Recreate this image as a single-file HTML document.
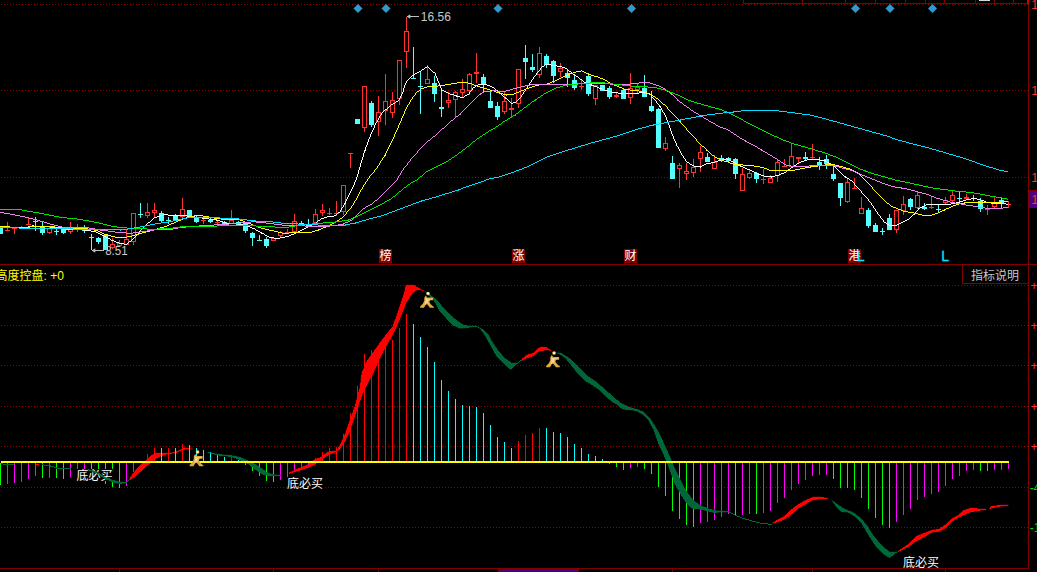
<!DOCTYPE html>
<html><head><meta charset="utf-8"><title>chart</title>
<style>html,body{margin:0;padding:0;background:#000;overflow:hidden}body{width:1037px;height:572px}svg{display:block}</style>
</head><body>
<svg width="1037" height="572" viewBox="0 0 1037 572">
<rect x="0" y="0" width="1037" height="572" fill="#000"/>
<g shape-rendering="crispEdges" stroke-width="1" fill="none">
<line x1="1" y1="4.5" x2="1028" y2="4.5" stroke="#900000" stroke-dasharray="1,2"/>
<line x1="1" y1="90.5" x2="1028" y2="90.5" stroke="#900000" stroke-dasharray="1,2"/>
<line x1="1" y1="177.5" x2="1028" y2="177.5" stroke="#900000" stroke-dasharray="1,2"/>
<line x1="1" y1="285.5" x2="1028" y2="285.5" stroke="#900000" stroke-dasharray="1,2"/>
<line x1="1" y1="325.5" x2="1028" y2="325.5" stroke="#900000" stroke-dasharray="1,2"/>
<line x1="1" y1="365.5" x2="1028" y2="365.5" stroke="#900000" stroke-dasharray="1,2"/>
<line x1="1" y1="406.5" x2="1028" y2="406.5" stroke="#900000" stroke-dasharray="1,2"/>
<line x1="1" y1="446.5" x2="1028" y2="446.5" stroke="#900000" stroke-dasharray="1,2"/>
<line x1="1" y1="487.5" x2="1028" y2="487.5" stroke="#900000" stroke-dasharray="1,2"/>
<line x1="1" y1="527.5" x2="1028" y2="527.5" stroke="#900000" stroke-dasharray="1,2"/>
<line x1="1028.5" y1="0" x2="1028.5" y2="569" stroke="#800000"/>
<line x1="0" y1="264.5" x2="1037" y2="264.5" stroke="#800000"/>
<line x1="0" y1="568.5" x2="1029" y2="568.5" stroke="#800000"/>
<line x1="743" y1="3.5" x2="1029" y2="3.5" stroke="#800000"/>
<line x1="743.5" y1="0" x2="743.5" y2="4" stroke="#800000"/>
<line x1="802.5" y1="0" x2="802.5" y2="4" stroke="#800000"/>
<line x1="845.5" y1="0" x2="845.5" y2="4" stroke="#800000"/>
<line x1="875.5" y1="0" x2="875.5" y2="4" stroke="#800000"/>
<line x1="905.5" y1="0" x2="905.5" y2="4" stroke="#800000"/>
<line x1="925.5" y1="0" x2="925.5" y2="4" stroke="#800000"/>
<line x1="944.5" y1="0" x2="944.5" y2="4" stroke="#800000"/>
<line x1="975.5" y1="0" x2="975.5" y2="4" stroke="#800000"/>
<line x1="994.5" y1="0" x2="994.5" y2="4" stroke="#800000"/>
<line x1="1013.5" y1="0" x2="1013.5" y2="4" stroke="#800000"/>
<rect x="1027" y="0" width="2" height="4" fill="#d00000" stroke="none"/>
<rect x="979" y="0" width="11" height="1" fill="#d8d8d8" stroke="none"/>
<line x1="119.5" y1="568" x2="119.5" y2="572" stroke="#800000"/>
<line x1="273.5" y1="568" x2="273.5" y2="572" stroke="#800000"/>
<line x1="378.5" y1="568" x2="378.5" y2="572" stroke="#800000"/>
<line x1="498.5" y1="568" x2="498.5" y2="572" stroke="#800000"/>
<line x1="578.5" y1="568" x2="578.5" y2="572" stroke="#800000"/>
<line x1="672.5" y1="568" x2="672.5" y2="572" stroke="#800000"/>
<line x1="812.5" y1="568" x2="812.5" y2="572" stroke="#800000"/>
<line x1="945.5" y1="568" x2="945.5" y2="572" stroke="#800000"/>
<rect x="499" y="569" width="79" height="3" fill="#4b0082" stroke="none"/>
<path d="M962.5 264.5V283.5H1028.5" stroke="#800000"/>
<rect x="1029" y="190" width="8" height="18" fill="#4b0082" stroke="none"/>
<line x1="1029" y1="190.5" x2="1037" y2="190.5" stroke="#800000"/><line x1="1029" y1="207.5" x2="1037" y2="207.5" stroke="#800000"/>
</g>
<path d="M358 4 L362.5 8.5 L358 13 L353.5 8.5Z" fill="#3399cc"/>
<path d="M386 4 L390.5 8.5 L386 13 L381.5 8.5Z" fill="#3399cc"/>
<path d="M498 4 L502.5 8.5 L498 13 L493.5 8.5Z" fill="#3399cc"/>
<path d="M631.5 4 L636.0 8.5 L631.5 13 L627.0 8.5Z" fill="#3399cc"/>
<path d="M855.5 4 L860.0 8.5 L855.5 13 L851.0 8.5Z" fill="#3399cc"/>
<path d="M890 4 L894.5 8.5 L890 13 L885.5 8.5Z" fill="#3399cc"/>
<path d="M932.5 4 L937.0 8.5 L932.5 13 L928.0 8.5Z" fill="#3399cc"/>
<g shape-rendering="crispEdges">
<rect x="0" y="227" width="1" height="7" fill="#54ffff"/>
<rect x="-2" y="228" width="5" height="6" fill="#54ffff"/>
<rect x="7" y="222" width="1" height="9" fill="#ff3232"/>
<rect x="5" y="230" width="5" height="1" fill="#ff3232"/>
<rect x="14" y="228" width="1" height="6" fill="#ff3232"/>
<rect x="12" y="228" width="5" height="1" fill="#ff3232"/>
<rect x="21" y="226" width="1" height="3" fill="#ff3232"/>
<rect x="19" y="228" width="5" height="1" fill="#ff3232"/>
<rect x="28" y="217" width="1" height="8" fill="#ff3232"/>
<rect x="26" y="224" width="5" height="1" fill="#ff3232"/>
<rect x="35" y="217" width="1" height="14" fill="#54ffff"/>
<rect x="33" y="221" width="5" height="1" fill="#54ffff"/>
<rect x="42" y="222" width="1" height="13" fill="#54ffff"/>
<rect x="40" y="226" width="5" height="7" fill="#54ffff"/>
<rect x="49" y="227" width="1" height="1" fill="#ff3232"/>
<rect x="49" y="233" width="1" height="1" fill="#ff3232"/>
<rect x="47.5" y="228.5" width="4" height="4" fill="#000" stroke="#ff3232" stroke-width="1"/>
<rect x="56" y="228" width="1" height="7" fill="#54ffff"/>
<rect x="54" y="231" width="5" height="1" fill="#54ffff"/>
<rect x="63" y="229" width="1" height="5" fill="#54ffff"/>
<rect x="61" y="229" width="5" height="4" fill="#54ffff"/>
<rect x="70" y="222" width="1" height="5" fill="#ff3232"/>
<rect x="70" y="232" width="1" height="2" fill="#ff3232"/>
<rect x="68.5" y="227.5" width="4" height="4" fill="#000" stroke="#ff3232" stroke-width="1"/>
<rect x="77" y="224" width="1" height="8" fill="#ff3232"/>
<rect x="75" y="229" width="5" height="1" fill="#ff3232"/>
<rect x="84" y="225" width="1" height="8" fill="#54ffff"/>
<rect x="82" y="230" width="5" height="1" fill="#54ffff"/>
<rect x="91" y="234" width="1" height="16" fill="#54ffff"/>
<rect x="89" y="237" width="5" height="1" fill="#54ffff"/>
<rect x="98" y="237" width="1" height="7" fill="#54ffff"/>
<rect x="96" y="238" width="5" height="4" fill="#54ffff"/>
<rect x="105" y="235" width="1" height="15" fill="#54ffff"/>
<rect x="103" y="235" width="5" height="15" fill="#54ffff"/>
<rect x="112" y="238" width="1" height="6" fill="#ff3232"/>
<rect x="112" y="248" width="1" height="1" fill="#ff3232"/>
<rect x="110.5" y="244.5" width="4" height="3" fill="#000" stroke="#ff3232" stroke-width="1"/>
<rect x="119" y="240" width="1" height="3" fill="#ff3232"/>
<rect x="117.5" y="243.5" width="4" height="2" fill="#000" stroke="#ff3232" stroke-width="1"/>
<rect x="126" y="230" width="1" height="9" fill="#ff3232"/>
<rect x="124.5" y="239.5" width="4" height="5" fill="#000" stroke="#ff3232" stroke-width="1"/>
<rect x="133" y="242" width="1" height="3" fill="#ff3232"/>
<rect x="131.5" y="213.5" width="4" height="28" fill="#000" stroke="#ff3232" stroke-width="1"/>
<rect x="140" y="203" width="1" height="15" fill="#54ffff"/>
<rect x="138" y="214" width="5" height="1" fill="#54ffff"/>
<rect x="147" y="203" width="1" height="9" fill="#ff3232"/>
<rect x="147" y="216" width="1" height="2" fill="#ff3232"/>
<rect x="145.5" y="212.5" width="4" height="3" fill="#000" stroke="#ff3232" stroke-width="1"/>
<rect x="154" y="203" width="1" height="7" fill="#ff3232"/>
<rect x="154" y="213" width="1" height="4" fill="#ff3232"/>
<rect x="152.5" y="210.5" width="4" height="2" fill="#000" stroke="#ff3232" stroke-width="1"/>
<rect x="161" y="211" width="1" height="11" fill="#54ffff"/>
<rect x="159" y="213" width="5" height="8" fill="#54ffff"/>
<rect x="168" y="217" width="1" height="7" fill="#54ffff"/>
<rect x="166" y="220" width="5" height="1" fill="#54ffff"/>
<rect x="175" y="214" width="1" height="6" fill="#54ffff"/>
<rect x="173" y="216" width="5" height="4" fill="#54ffff"/>
<rect x="182" y="198" width="1" height="11" fill="#ff3232"/>
<rect x="182" y="217" width="1" height="2" fill="#ff3232"/>
<rect x="180.5" y="209.5" width="4" height="7" fill="#000" stroke="#ff3232" stroke-width="1"/>
<rect x="189" y="210" width="1" height="7" fill="#54ffff"/>
<rect x="187" y="210" width="5" height="7" fill="#54ffff"/>
<rect x="196" y="216" width="1" height="7" fill="#54ffff"/>
<rect x="194" y="218" width="5" height="4" fill="#54ffff"/>
<rect x="203" y="219" width="1" height="5" fill="#ff3232"/>
<rect x="201" y="220" width="5" height="1" fill="#ff3232"/>
<rect x="210" y="218" width="1" height="5" fill="#54ffff"/>
<rect x="208" y="220" width="5" height="2" fill="#54ffff"/>
<rect x="217" y="220" width="1" height="5" fill="#ff3232"/>
<rect x="215" y="222" width="5" height="1" fill="#ff3232"/>
<rect x="224" y="221" width="1" height="4" fill="#54ffff"/>
<rect x="222" y="222" width="5" height="2" fill="#54ffff"/>
<rect x="231" y="210" width="1" height="10" fill="#ff3232"/>
<rect x="229.5" y="220.5" width="4" height="3" fill="#000" stroke="#ff3232" stroke-width="1"/>
<rect x="238" y="221" width="1" height="5" fill="#54ffff"/>
<rect x="236" y="222" width="5" height="4" fill="#54ffff"/>
<rect x="245" y="222" width="1" height="11" fill="#54ffff"/>
<rect x="243" y="223" width="5" height="8" fill="#54ffff"/>
<rect x="252" y="232" width="1" height="14" fill="#54ffff"/>
<rect x="250" y="233" width="5" height="5" fill="#54ffff"/>
<rect x="259" y="235" width="1" height="5" fill="#54ffff"/>
<rect x="257" y="240" width="5" height="1" fill="#54ffff"/>
<rect x="266" y="237" width="1" height="11" fill="#54ffff"/>
<rect x="264" y="239" width="5" height="7" fill="#54ffff"/>
<rect x="271.5" y="238.5" width="4" height="2" fill="#000" stroke="#ff3232" stroke-width="1"/>
<rect x="280" y="231" width="1" height="1" fill="#ff3232"/>
<rect x="280" y="236" width="1" height="2" fill="#ff3232"/>
<rect x="278.5" y="232.5" width="4" height="3" fill="#000" stroke="#ff3232" stroke-width="1"/>
<rect x="287" y="229" width="1" height="5" fill="#ff3232"/>
<rect x="285" y="232" width="5" height="1" fill="#ff3232"/>
<rect x="294" y="214" width="1" height="7" fill="#ff3232"/>
<rect x="292.5" y="221.5" width="4" height="10" fill="#000" stroke="#ff3232" stroke-width="1"/>
<rect x="301" y="221" width="1" height="5" fill="#54ffff"/>
<rect x="299" y="223" width="5" height="1" fill="#54ffff"/>
<rect x="308" y="219" width="1" height="6" fill="#54ffff"/>
<rect x="306" y="225" width="5" height="1" fill="#54ffff"/>
<rect x="315" y="209" width="1" height="5" fill="#ff3232"/>
<rect x="313.5" y="214.5" width="4" height="8" fill="#000" stroke="#ff3232" stroke-width="1"/>
<rect x="322" y="204" width="1" height="6" fill="#ff3232"/>
<rect x="322" y="213" width="1" height="3" fill="#ff3232"/>
<rect x="320.5" y="210.5" width="4" height="2" fill="#000" stroke="#ff3232" stroke-width="1"/>
<rect x="329" y="208" width="1" height="7" fill="#ff3232"/>
<rect x="327" y="213" width="5" height="1" fill="#ff3232"/>
<rect x="336" y="201" width="1" height="12" fill="#ff3232"/>
<rect x="336" y="214" width="1" height="2" fill="#ff3232"/>
<rect x="334" y="213" width="5" height="1" fill="#ff3232"/>
<rect x="343" y="212" width="1" height="3" fill="#ff3232"/>
<rect x="341.5" y="185.5" width="4" height="26" fill="#000" stroke="#ff3232" stroke-width="1"/>
<rect x="350" y="153" width="1" height="15" fill="#ff3232"/>
<rect x="348" y="153" width="5" height="1" fill="#ff3232"/>
<rect x="357" y="119" width="1" height="5" fill="#54ffff"/>
<rect x="355" y="119" width="5" height="5" fill="#54ffff"/>
<rect x="364" y="128" width="1" height="4" fill="#ff3232"/>
<rect x="362.5" y="86.5" width="4" height="41" fill="#000" stroke="#ff3232" stroke-width="1"/>
<rect x="371" y="101" width="1" height="26" fill="#54ffff"/>
<rect x="369" y="103" width="5" height="22" fill="#54ffff"/>
<rect x="378" y="96" width="1" height="16" fill="#ff3232"/>
<rect x="378" y="122" width="1" height="14" fill="#ff3232"/>
<rect x="376.5" y="112.5" width="4" height="9" fill="#000" stroke="#ff3232" stroke-width="1"/>
<rect x="385" y="74" width="1" height="27" fill="#ff3232"/>
<rect x="385" y="111" width="1" height="14" fill="#ff3232"/>
<rect x="383.5" y="101.5" width="4" height="9" fill="#000" stroke="#ff3232" stroke-width="1"/>
<rect x="392" y="92" width="1" height="8" fill="#ff3232"/>
<rect x="392" y="113" width="1" height="5" fill="#ff3232"/>
<rect x="390.5" y="100.5" width="4" height="12" fill="#000" stroke="#ff3232" stroke-width="1"/>
<rect x="399" y="99" width="1" height="6" fill="#ff3232"/>
<rect x="397.5" y="60.5" width="4" height="38" fill="#000" stroke="#ff3232" stroke-width="1"/>
<rect x="406" y="17" width="1" height="14" fill="#ff3232"/>
<rect x="406" y="52" width="1" height="16" fill="#ff3232"/>
<rect x="404.5" y="31.5" width="4" height="20" fill="#000" stroke="#ff3232" stroke-width="1"/>
<rect x="413" y="47" width="1" height="31" fill="#54ffff"/>
<rect x="411" y="78" width="5" height="1" fill="#54ffff"/>
<rect x="420" y="72" width="1" height="42" fill="#54ffff"/>
<rect x="418" y="86" width="5" height="1" fill="#54ffff"/>
<rect x="427" y="65" width="1" height="14" fill="#ff3232"/>
<rect x="425.5" y="79.5" width="4" height="4" fill="#000" stroke="#ff3232" stroke-width="1"/>
<rect x="434" y="76" width="1" height="26" fill="#54ffff"/>
<rect x="432" y="83" width="5" height="11" fill="#54ffff"/>
<rect x="441" y="90" width="1" height="27" fill="#54ffff"/>
<rect x="439" y="107" width="5" height="2" fill="#54ffff"/>
<rect x="448" y="92" width="1" height="8" fill="#ff3232"/>
<rect x="448" y="103" width="1" height="5" fill="#ff3232"/>
<rect x="446.5" y="100.5" width="4" height="2" fill="#000" stroke="#ff3232" stroke-width="1"/>
<rect x="455" y="91" width="1" height="1" fill="#ff3232"/>
<rect x="455" y="100" width="1" height="17" fill="#ff3232"/>
<rect x="453.5" y="92.5" width="4" height="7" fill="#000" stroke="#ff3232" stroke-width="1"/>
<rect x="462" y="79" width="1" height="10" fill="#ff3232"/>
<rect x="462" y="93" width="1" height="4" fill="#ff3232"/>
<rect x="460.5" y="89.5" width="4" height="3" fill="#000" stroke="#ff3232" stroke-width="1"/>
<rect x="469" y="73" width="1" height="1" fill="#ff3232"/>
<rect x="469" y="91" width="1" height="4" fill="#ff3232"/>
<rect x="467.5" y="74.5" width="4" height="16" fill="#000" stroke="#ff3232" stroke-width="1"/>
<rect x="476" y="53" width="1" height="19" fill="#ff3232"/>
<rect x="476" y="74" width="1" height="9" fill="#ff3232"/>
<rect x="474" y="72" width="5" height="2" fill="#ff3232"/>
<rect x="483" y="74" width="1" height="18" fill="#54ffff"/>
<rect x="481" y="77" width="5" height="8" fill="#54ffff"/>
<rect x="490" y="91" width="1" height="17" fill="#54ffff"/>
<rect x="488" y="101" width="5" height="7" fill="#54ffff"/>
<rect x="497" y="102" width="1" height="18" fill="#54ffff"/>
<rect x="495" y="106" width="5" height="11" fill="#54ffff"/>
<rect x="504" y="92" width="1" height="9" fill="#ff3232"/>
<rect x="504" y="112" width="1" height="2" fill="#ff3232"/>
<rect x="502.5" y="101.5" width="4" height="10" fill="#000" stroke="#ff3232" stroke-width="1"/>
<rect x="511" y="98" width="1" height="10" fill="#ff3232"/>
<rect x="511" y="110" width="1" height="8" fill="#ff3232"/>
<rect x="509" y="108" width="5" height="2" fill="#ff3232"/>
<rect x="518" y="104" width="1" height="4" fill="#ff3232"/>
<rect x="516.5" y="69.5" width="4" height="34" fill="#000" stroke="#ff3232" stroke-width="1"/>
<rect x="525" y="45" width="1" height="34" fill="#54ffff"/>
<rect x="523" y="58" width="5" height="4" fill="#54ffff"/>
<rect x="532" y="54" width="1" height="18" fill="#54ffff"/>
<rect x="530" y="67" width="5" height="3" fill="#54ffff"/>
<rect x="539" y="47" width="1" height="6" fill="#ff3232"/>
<rect x="539" y="75" width="1" height="3" fill="#ff3232"/>
<rect x="537.5" y="53.5" width="4" height="21" fill="#000" stroke="#ff3232" stroke-width="1"/>
<rect x="546" y="54" width="1" height="14" fill="#54ffff"/>
<rect x="544" y="56" width="5" height="9" fill="#54ffff"/>
<rect x="553" y="60" width="1" height="23" fill="#54ffff"/>
<rect x="551" y="61" width="5" height="15" fill="#54ffff"/>
<rect x="560" y="63" width="1" height="5" fill="#ff3232"/>
<rect x="560" y="72" width="1" height="5" fill="#ff3232"/>
<rect x="558.5" y="68.5" width="4" height="3" fill="#000" stroke="#ff3232" stroke-width="1"/>
<rect x="567" y="69" width="1" height="18" fill="#54ffff"/>
<rect x="565" y="73" width="5" height="5" fill="#54ffff"/>
<rect x="574" y="75" width="1" height="15" fill="#54ffff"/>
<rect x="572" y="80" width="5" height="8" fill="#54ffff"/>
<rect x="581" y="80" width="1" height="10" fill="#ff3232"/>
<rect x="579" y="86" width="5" height="1" fill="#ff3232"/>
<rect x="588" y="73" width="1" height="23" fill="#54ffff"/>
<rect x="586" y="76" width="5" height="18" fill="#54ffff"/>
<rect x="595" y="99" width="1" height="6" fill="#ff3232"/>
<rect x="593.5" y="85.5" width="4" height="13" fill="#000" stroke="#ff3232" stroke-width="1"/>
<rect x="602" y="85" width="1" height="6" fill="#54ffff"/>
<rect x="600" y="85" width="5" height="6" fill="#54ffff"/>
<rect x="609" y="86" width="1" height="13" fill="#54ffff"/>
<rect x="607" y="88" width="5" height="9" fill="#54ffff"/>
<rect x="616" y="93" width="1" height="2" fill="#ff3232"/>
<rect x="616" y="97" width="1" height="1" fill="#ff3232"/>
<rect x="614" y="95" width="5" height="2" fill="#ff3232"/>
<rect x="623" y="88" width="1" height="11" fill="#54ffff"/>
<rect x="621" y="90" width="5" height="9" fill="#54ffff"/>
<rect x="630" y="73" width="1" height="15" fill="#ff3232"/>
<rect x="630" y="98" width="1" height="6" fill="#ff3232"/>
<rect x="628.5" y="88.5" width="4" height="9" fill="#000" stroke="#ff3232" stroke-width="1"/>
<rect x="637" y="84" width="1" height="3" fill="#ff3232"/>
<rect x="637" y="90" width="1" height="3" fill="#ff3232"/>
<rect x="635.5" y="87.5" width="4" height="2" fill="#000" stroke="#ff3232" stroke-width="1"/>
<rect x="644" y="75" width="1" height="22" fill="#54ffff"/>
<rect x="642" y="88" width="5" height="9" fill="#54ffff"/>
<rect x="651" y="91" width="1" height="21" fill="#54ffff"/>
<rect x="649" y="106" width="5" height="5" fill="#54ffff"/>
<rect x="658" y="108" width="1" height="40" fill="#54ffff"/>
<rect x="656" y="109" width="5" height="39" fill="#54ffff"/>
<rect x="665" y="137" width="1" height="6" fill="#ff3232"/>
<rect x="665" y="149" width="1" height="2" fill="#ff3232"/>
<rect x="663.5" y="143.5" width="4" height="5" fill="#000" stroke="#ff3232" stroke-width="1"/>
<rect x="672" y="156" width="1" height="23" fill="#54ffff"/>
<rect x="670" y="163" width="5" height="16" fill="#54ffff"/>
<rect x="679" y="163" width="1" height="2" fill="#ff3232"/>
<rect x="679" y="169" width="1" height="19" fill="#ff3232"/>
<rect x="677.5" y="165.5" width="4" height="3" fill="#000" stroke="#ff3232" stroke-width="1"/>
<rect x="686" y="163" width="1" height="8" fill="#ff3232"/>
<rect x="686" y="174" width="1" height="6" fill="#ff3232"/>
<rect x="684.5" y="171.5" width="4" height="2" fill="#000" stroke="#ff3232" stroke-width="1"/>
<rect x="693" y="159" width="1" height="8" fill="#ff3232"/>
<rect x="693" y="173" width="1" height="4" fill="#ff3232"/>
<rect x="691.5" y="167.5" width="4" height="5" fill="#000" stroke="#ff3232" stroke-width="1"/>
<rect x="700" y="146" width="1" height="6" fill="#ff3232"/>
<rect x="700" y="159" width="1" height="13" fill="#ff3232"/>
<rect x="698.5" y="152.5" width="4" height="6" fill="#000" stroke="#ff3232" stroke-width="1"/>
<rect x="707" y="153" width="1" height="9" fill="#54ffff"/>
<rect x="705" y="157" width="5" height="5" fill="#54ffff"/>
<rect x="714" y="155" width="1" height="7" fill="#ff3232"/>
<rect x="712.5" y="162.5" width="4" height="6" fill="#000" stroke="#ff3232" stroke-width="1"/>
<rect x="721" y="155" width="1" height="7" fill="#54ffff"/>
<rect x="719" y="158" width="5" height="1" fill="#54ffff"/>
<rect x="728" y="157" width="1" height="5" fill="#54ffff"/>
<rect x="726" y="158" width="5" height="3" fill="#54ffff"/>
<rect x="735" y="158" width="1" height="21" fill="#54ffff"/>
<rect x="733" y="159" width="5" height="15" fill="#54ffff"/>
<rect x="742" y="168" width="1" height="6" fill="#ff3232"/>
<rect x="740.5" y="174.5" width="4" height="16" fill="#000" stroke="#ff3232" stroke-width="1"/>
<rect x="749" y="169" width="1" height="4" fill="#ff3232"/>
<rect x="749" y="178" width="1" height="1" fill="#ff3232"/>
<rect x="747.5" y="173.5" width="4" height="4" fill="#000" stroke="#ff3232" stroke-width="1"/>
<rect x="756" y="172" width="1" height="11" fill="#54ffff"/>
<rect x="754" y="173" width="5" height="6" fill="#54ffff"/>
<rect x="763" y="169" width="1" height="15" fill="#ff3232"/>
<rect x="761" y="179" width="5" height="1" fill="#ff3232"/>
<rect x="770" y="175" width="1" height="3" fill="#ff3232"/>
<rect x="768.5" y="178.5" width="4" height="4" fill="#000" stroke="#ff3232" stroke-width="1"/>
<rect x="777" y="160" width="1" height="2" fill="#ff3232"/>
<rect x="777" y="176" width="1" height="6" fill="#ff3232"/>
<rect x="775.5" y="162.5" width="4" height="13" fill="#000" stroke="#ff3232" stroke-width="1"/>
<rect x="784" y="159" width="1" height="8" fill="#ff3232"/>
<rect x="782" y="166" width="5" height="1" fill="#ff3232"/>
<rect x="791" y="144" width="1" height="12" fill="#ff3232"/>
<rect x="791" y="167" width="1" height="1" fill="#ff3232"/>
<rect x="789.5" y="156.5" width="4" height="10" fill="#000" stroke="#ff3232" stroke-width="1"/>
<rect x="798" y="159" width="1" height="5" fill="#ff3232"/>
<rect x="796" y="157" width="5" height="2" fill="#ff3232"/>
<rect x="805" y="152" width="1" height="8" fill="#54ffff"/>
<rect x="803" y="157" width="5" height="2" fill="#54ffff"/>
<rect x="812" y="144" width="1" height="16" fill="#ff3232"/>
<rect x="810" y="157" width="5" height="1" fill="#ff3232"/>
<rect x="819" y="157" width="1" height="13" fill="#54ffff"/>
<rect x="817" y="162" width="5" height="4" fill="#54ffff"/>
<rect x="826" y="155" width="1" height="14" fill="#54ffff"/>
<rect x="824" y="159" width="5" height="5" fill="#54ffff"/>
<rect x="833" y="165" width="1" height="16" fill="#54ffff"/>
<rect x="831" y="174" width="5" height="5" fill="#54ffff"/>
<rect x="840" y="183" width="1" height="23" fill="#54ffff"/>
<rect x="838" y="183" width="5" height="15" fill="#54ffff"/>
<rect x="847" y="179" width="1" height="3" fill="#ff3232"/>
<rect x="847" y="202" width="1" height="1" fill="#ff3232"/>
<rect x="845.5" y="182.5" width="4" height="19" fill="#000" stroke="#ff3232" stroke-width="1"/>
<rect x="854" y="178" width="1" height="11" fill="#ff3232"/>
<rect x="852" y="188" width="5" height="1" fill="#ff3232"/>
<rect x="861" y="197" width="1" height="11" fill="#ff3232"/>
<rect x="859.5" y="208.5" width="4" height="5" fill="#000" stroke="#ff3232" stroke-width="1"/>
<rect x="868" y="208" width="1" height="20" fill="#54ffff"/>
<rect x="866" y="210" width="5" height="16" fill="#54ffff"/>
<rect x="875" y="223" width="1" height="9" fill="#54ffff"/>
<rect x="873" y="225" width="5" height="7" fill="#54ffff"/>
<rect x="882" y="228" width="1" height="7" fill="#54ffff"/>
<rect x="880" y="231" width="5" height="1" fill="#54ffff"/>
<rect x="889" y="214" width="1" height="16" fill="#54ffff"/>
<rect x="887" y="218" width="5" height="12" fill="#54ffff"/>
<rect x="896" y="230" width="1" height="3" fill="#ff3232"/>
<rect x="894.5" y="210.5" width="4" height="19" fill="#000" stroke="#ff3232" stroke-width="1"/>
<rect x="903" y="196" width="1" height="8" fill="#ff3232"/>
<rect x="903" y="211" width="1" height="4" fill="#ff3232"/>
<rect x="901.5" y="204.5" width="4" height="6" fill="#000" stroke="#ff3232" stroke-width="1"/>
<rect x="910" y="198" width="1" height="12" fill="#54ffff"/>
<rect x="908" y="199" width="5" height="8" fill="#54ffff"/>
<rect x="917" y="192" width="1" height="3" fill="#ff3232"/>
<rect x="917" y="208" width="1" height="1" fill="#ff3232"/>
<rect x="915.5" y="195.5" width="4" height="12" fill="#000" stroke="#ff3232" stroke-width="1"/>
<rect x="924" y="203" width="1" height="7" fill="#54ffff"/>
<rect x="922" y="207" width="5" height="2" fill="#54ffff"/>
<rect x="931" y="197" width="1" height="12" fill="#ff3232"/>
<rect x="929" y="207" width="5" height="1" fill="#ff3232"/>
<rect x="938" y="205" width="1" height="8" fill="#54ffff"/>
<rect x="936" y="209" width="5" height="1" fill="#54ffff"/>
<rect x="945" y="197" width="1" height="3" fill="#ff3232"/>
<rect x="945" y="203" width="1" height="1" fill="#ff3232"/>
<rect x="943.5" y="200.5" width="4" height="2" fill="#000" stroke="#ff3232" stroke-width="1"/>
<rect x="952" y="191" width="1" height="4" fill="#ff3232"/>
<rect x="952" y="201" width="1" height="1" fill="#ff3232"/>
<rect x="950.5" y="195.5" width="4" height="5" fill="#000" stroke="#ff3232" stroke-width="1"/>
<rect x="959" y="192" width="1" height="10" fill="#54ffff"/>
<rect x="957" y="198" width="5" height="1" fill="#54ffff"/>
<rect x="966" y="194" width="1" height="3" fill="#ff3232"/>
<rect x="966" y="199" width="1" height="1" fill="#ff3232"/>
<rect x="964" y="197" width="5" height="2" fill="#ff3232"/>
<rect x="973" y="195" width="1" height="6" fill="#54ffff"/>
<rect x="971" y="198" width="5" height="1" fill="#54ffff"/>
<rect x="980" y="198" width="1" height="14" fill="#54ffff"/>
<rect x="978" y="201" width="5" height="8" fill="#54ffff"/>
<rect x="987" y="205" width="1" height="3" fill="#ff3232"/>
<rect x="987" y="210" width="1" height="5" fill="#ff3232"/>
<rect x="985" y="208" width="5" height="2" fill="#ff3232"/>
<rect x="994" y="197" width="1" height="6" fill="#ff3232"/>
<rect x="994" y="207" width="1" height="2" fill="#ff3232"/>
<rect x="992.5" y="203.5" width="4" height="3" fill="#000" stroke="#ff3232" stroke-width="1"/>
<rect x="1001" y="198" width="1" height="10" fill="#54ffff"/>
<rect x="999" y="200" width="5" height="4" fill="#54ffff"/>
<rect x="1008" y="201" width="1" height="7" fill="#ff3232"/>
<rect x="1006" y="204" width="5" height="1" fill="#ff3232"/>
</g>
<g shape-rendering="crispEdges" stroke-linejoin="round">
<path d="M154 217h3v1h-3zM195 217h7v1h-7zM324 217h3v1h-3zM752 171h2v1h-2zM690 164h2v1h-2zM704 164h2v1h-2zM831 164h2v1h-2zM419 71h2v1h-2zM569 71h2v1h-2zM743 167h2v1h-2zM791 167h2v1h-2zM226 223h12v1h-12zM314 223h2v1h-2zM899 223h2v1h-2zM450 94h4v1h-4zM467 94h2v1h-2zM649 94h2v1h-2zM446 92h2v1h-2zM611 92h7v1h-7zM639 92h7v1h-7zM32 225h2v1h-2zM243 225h4v1h-4zM310 225h2v1h-2zM889 225h8v1h-8zM202 218h7v1h-7zM321 218h3v1h-3zM238 224h5v1h-5zM312 224h2v1h-2zM887 224h2v1h-2zM897 224h2v1h-2zM478 84h9v1h-9zM589 84h3v1h-3zM454 95h3v1h-3zM465 95h2v1h-2zM687 162h2v1h-2zM711 162h4v1h-4zM733 162h2v1h-2zM799 162h2v1h-2zM827 162h2v1h-2zM148 222h2v1h-2zM223 222h3v1h-3zM884 222h2v1h-2zM901 222h2v1h-2zM344 203h2v1h-2zM951 203h5v1h-5zM991 203h15v1h-15zM715 161h3v1h-3zM731 161h2v1h-2zM801 161h3v1h-3zM825 161h2v1h-2zM0 227h28v1h-28zM50 227h7v1h-7zM250 227h2v1h-2zM306 227h2v1h-2zM84 230h7v1h-7zM256 230h2v1h-2zM300 230h2v1h-2zM104 236h2v1h-2zM267 236h2v1h-2zM285 236h4v1h-4zM694 166h8v1h-8zM740 166h3v1h-3zM57 228h6v1h-6zM252 228h3v1h-3zM304 228h2v1h-2zM456 96h4v1h-4zM157 216h3v1h-3zM187 216h8v1h-8zM327 216h7v1h-7zM62 229h22v1h-22zM302 229h2v1h-2zM111 240h3v1h-3zM385 109h2v1h-2zM718 160h4v1h-4zM729 160h2v1h-2zM804 160h3v1h-3zM820 160h6v1h-6zM163 214h5v1h-5zM913 214h2v1h-2zM28 226h4v1h-4zM34 226h16v1h-16zM247 226h3v1h-3zM308 226h2v1h-2zM754 172h2v1h-2zM784 172h2v1h-2zM692 165h2v1h-2zM702 165h2v1h-2zM738 165h3v1h-3zM794 165h2v1h-2zM417 72h2v1h-2zM433 72h2v1h-2zM963 200h3v1h-3zM981 200h3v1h-3zM722 159h4v1h-4zM727 159h2v1h-2zM807 159h13v1h-13zM448 93h2v1h-2zM618 93h21v1h-21zM646 93h3v1h-3zM160 215h3v1h-3zM168 215h19v1h-19zM334 215h2v1h-2zM100 234h2v1h-2zM291 234h3v1h-3zM513 102h3v1h-3zM114 241h2v1h-2zM129 241h2v1h-2zM422 69h2v1h-2zM584 82h2v1h-2zM106 237h2v1h-2zM269 237h5v1h-5zM280 237h5v1h-5zM425 67h2v1h-2zM562 67h3v1h-3zM415 73h2v1h-2zM571 73h2v1h-2zM551 65h6v1h-6zM412 75h2v1h-2zM764 176h11v1h-11zM844 176h2v1h-2zM747 169h3v1h-3zM788 169h2v1h-2zM460 97h4v1h-4zM504 97h2v1h-2zM545 64h6v1h-6zM364 150h2v1h-2zM602 89h2v1h-2zM706 163h5v1h-5zM735 163h2v1h-2zM797 163h2v1h-2zM829 163h2v1h-2zM924 205h2v1h-2zM586 83h3v1h-3zM91 231h5v1h-5zM258 231h2v1h-2zM298 231h2v1h-2zM845 177h2v1h-2zM960 201h3v1h-3zM984 201h2v1h-2zM98 233h2v1h-2zM261 233h3v1h-3zM294 233h2v1h-2zM920 207h2v1h-2zM396 101h2v1h-2zM926 204h25v1h-25zM1006 204h2v1h-2zM956 202h4v1h-4zM986 202h5v1h-5zM444 91h2v1h-2zM608 91h4v1h-4zM220 221h3v1h-3zM903 221h2v1h-2zM116 242h3v1h-3zM441 90h3v1h-3zM496 90h2v1h-2zM604 90h4v1h-4zM96 232h2v1h-2zM260 232h2v1h-2zM296 232h2v1h-2zM102 235h2v1h-2zM265 235h2v1h-2zM289 235h2v1h-2zM761 175h3v1h-3zM775 175h4v1h-4zM391 104h2v1h-2zM580 79h2v1h-2zM209 219h8v1h-8zM907 219h2v1h-2zM756 173h2v1h-2zM781 173h3v1h-3zM599 88h3v1h-3zM573 74h2v1h-2zM542 66h2v1h-2zM557 66h5v1h-5zM490 86h2v1h-2zM594 86h3v1h-3zM473 87h2v1h-2zM492 87h2v1h-2zM597 87h2v1h-2zM216 220h4v1h-4zM318 220h2v1h-2zM905 220h2v1h-2zM119 243h5v1h-5zM505 98h2v1h-2zM966 199h5v1h-5zM977 199h4v1h-4zM124 244h3v1h-3zM476 85h2v1h-2zM487 85h3v1h-3zM591 85h3v1h-3zM576 76h2v1h-2zM338 212h2v1h-2zM971 198h6v1h-6zM922 206h2v1h-2zM565 68h2v1h-2zM659 106h2v1h-2zM108 238h2v1h-2zM274 238h6v1h-6zM758 174h3v1h-3zM779 174h2v1h-2zM393 103h2v1h-2zM511 103h2v1h-2zM918 208h2v1h-2zM847 178h2v1h-2zM745 168h2v1h-2zM850 180h2v1h-2zM750 170h2v1h-2zM538 71h1v1h-1zM359 167h1v3h-1zM669 125h1v3h-1zM857 187h1v1h-1zM886 223h1v1h-1zM432 71h1v1h-1zM145 225h1v1h-1zM910 217h1v1h-1zM356 177h1v3h-1zM683 156h1v2h-1zM686 161h1v1h-1zM533 77h1v2h-1zM864 195h1v1h-1zM676 143h1v3h-1zM679 149h1v2h-1zM865 196h1v1h-1zM142 228h1v1h-1zM651 95h1v2h-1zM400 96h1v2h-1zM875 209h1v2h-1zM661 108h1v2h-1zM878 214h1v1h-1zM368 139h1v3h-1zM571 72h1v1h-1zM662 110h1v2h-1zM529 83h1v2h-1zM879 215h1v1h-1zM137 234h1v1h-1zM665 115h1v2h-1zM395 102h1v1h-1zM430 69h1v1h-1zM438 81h1v2h-1zM541 67h1v1h-1zM351 189h1v2h-1zM793 166h1v1h-1zM472 88h1v2h-1zM367 142h1v3h-1zM917 210h1v1h-1zM110 239h1v1h-1zM509 101h1v1h-1zM347 197h1v2h-1zM675 141h1v2h-1zM498 91h1v1h-1zM510 102h1v1h-1zM407 80h1v1h-1zM525 89h1v2h-1zM856 186h1v1h-1zM399 98h1v2h-1zM517 100h1v1h-1zM582 80h1v1h-1zM532 79h1v1h-1zM833 165h1v1h-1zM384 110h1v1h-1zM316 222h1v1h-1zM363 153h1v4h-1zM834 166h1v1h-1zM494 88h1v1h-1zM678 147h1v2h-1zM567 69h1v1h-1zM132 239h1v1h-1zM414 74h1v1h-1zM320 219h1v1h-1zM379 116h1v2h-1zM674 139h1v2h-1zM664 113h1v2h-1zM540 68h1v2h-1zM403 88h1v4h-1zM912 215h1v1h-1zM350 191h1v2h-1zM362 157h1v3h-1zM841 173h1v1h-1zM437 78h1v3h-1zM660 107h1v1h-1zM151 220h1v1h-1zM375 123h1v2h-1zM378 118h1v2h-1zM882 219h1v1h-1zM144 226h1v1h-1zM346 199h1v2h-1zM358 170h1v4h-1zM685 159h1v2h-1zM374 125h1v3h-1zM668 122h1v3h-1zM866 197h1v1h-1zM877 212h1v2h-1zM345 201h1v2h-1zM840 172h1v1h-1zM663 112h1v1h-1zM867 198h1v1h-1zM357 174h1v3h-1zM653 98h1v1h-1zM528 85h1v1h-1zM411 76h1v1h-1zM881 218h1v1h-1zM535 75h1v1h-1zM406 81h1v2h-1zM341 208h1v2h-1zM670 128h1v3h-1zM859 189h1v1h-1zM354 182h1v3h-1zM402 92h1v2h-1zM519 98h1v1h-1zM136 235h1v1h-1zM139 231h1v1h-1zM398 100h1v1h-1zM390 105h1v1h-1zM858 188h1v1h-1zM381 113h1v2h-1zM436 76h1v2h-1zM127 243h1v1h-1zM409 78h1v1h-1zM469 92h1v2h-1zM349 193h1v2h-1zM421 70h1v1h-1zM365 147h1v3h-1zM377 120h1v2h-1zM652 97h1v1h-1zM836 168h1v1h-1zM499 92h1v1h-1zM336 214h1v1h-1zM531 80h1v2h-1zM673 136h1v3h-1zM370 134h1v3h-1zM880 216h1v2h-1zM726 158h1v1h-1zM500 93h1v1h-1zM439 83h1v3h-1zM883 220h1v2h-1zM340 210h1v2h-1zM373 128h1v2h-1zM134 237h1v1h-1zM353 185h1v2h-1zM131 240h1v1h-1zM435 73h1v3h-1zM786 171h1v1h-1zM344 204h1v1h-1zM527 86h1v2h-1zM914 213h1v1h-1zM360 163h1v4h-1zM522 94h1v1h-1zM568 70h1v1h-1zM153 218h1v1h-1zM264 234h1v1h-1zM146 224h1v1h-1zM869 201h1v1h-1zM405 83h1v2h-1zM583 81h1v1h-1zM428 67h1v1h-1zM348 195h1v2h-1zM843 175h1v1h-1zM854 183h1v2h-1zM388 107h1v1h-1zM861 191h1v2h-1zM361 160h1v3h-1zM790 168h1v1h-1zM835 167h1v1h-1zM495 89h1v1h-1zM404 85h1v3h-1zM868 199h1v2h-1zM507 99h1v1h-1zM372 130h1v2h-1zM255 229h1v1h-1zM427 66h1v1h-1zM666 117h1v3h-1zM842 174h1v1h-1zM150 221h1v1h-1zM534 76h1v1h-1zM537 72h1v1h-1zM355 180h1v2h-1zM672 134h1v2h-1zM909 218h1v1h-1zM521 95h1v2h-1zM138 232h1v2h-1zM578 77h1v1h-1zM579 78h1v1h-1zM654 99h1v1h-1zM871 203h1v2h-1zM544 65h1v1h-1zM471 90h1v1h-1zM916 211h1v1h-1zM408 79h1v1h-1zM853 182h1v1h-1zM502 95h1v1h-1zM343 205h1v2h-1zM464 96h1v1h-1zM141 229h1v1h-1zM371 132h1v2h-1zM860 190h1v1h-1zM575 75h1v1h-1zM376 122h1v1h-1zM441 88h1v2h-1zM516 101h1v1h-1zM671 131h1v3h-1zM838 170h1v1h-1zM796 164h1v1h-1zM133 238h1v1h-1zM380 115h1v1h-1zM383 111h1v1h-1zM852 181h1v1h-1zM524 91h1v1h-1zM475 86h1v1h-1zM152 219h1v1h-1zM536 73h1v2h-1zM837 169h1v1h-1zM682 155h1v1h-1zM667 120h1v2h-1zM870 202h1v1h-1zM849 179h1v1h-1zM501 94h1v1h-1zM440 86h1v2h-1zM689 163h1v1h-1zM657 103h1v1h-1zM874 208h1v1h-1zM387 108h1v1h-1zM520 97h1v1h-1zM862 193h1v1h-1zM863 194h1v1h-1zM539 70h1v1h-1zM410 77h1v1h-1zM911 216h1v1h-1zM143 227h1v1h-1zM656 101h1v2h-1zM873 206h1v2h-1zM429 68h1v1h-1zM523 92h1v2h-1zM855 185h1v1h-1zM140 230h1v1h-1zM681 153h1v2h-1zM369 137h1v2h-1zM700 167h1v1h-1zM135 236h1v1h-1zM508 100h1v1h-1zM352 187h1v2h-1zM128 242h1v1h-1zM918 209h1v1h-1zM470 91h1v1h-1zM771 177h1v1h-1zM401 94h1v2h-1zM342 207h1v1h-1zM366 145h1v2h-1zM147 223h1v1h-1zM337 213h1v1h-1zM680 151h1v2h-1zM518 99h1v1h-1zM530 82h1v1h-1zM684 158h1v1h-1zM655 100h1v1h-1zM317 221h1v1h-1zM787 170h1v1h-1zM677 146h1v1h-1zM872 205h1v1h-1zM382 112h1v1h-1zM915 212h1v1h-1zM364 151h1v2h-1zM876 211h1v1h-1zM503 96h1v1h-1zM424 68h1v1h-1zM737 164h1v1h-1zM389 106h1v1h-1zM839 171h1v1h-1zM658 104h1v1h-1zM659 105h1v1h-1zM431 70h1v1h-1zM526 88h1v1h-1z" fill="#ffffff"/>
<path d="M181 219h2v1h-2zM221 219h19v1h-19zM417 91h2v1h-2zM494 91h2v1h-2zM519 91h2v1h-2zM639 91h6v1h-6zM0 226h10v1h-10zM30 226h25v1h-25zM164 226h3v1h-3zM256 226h2v1h-2zM326 226h2v1h-2zM451 83h6v1h-6zM468 83h4v1h-4zM547 83h3v1h-3zM424 87h3v1h-3zM480 87h4v1h-4zM529 87h3v1h-3zM619 87h3v1h-3zM724 161h4v1h-4zM901 210h2v1h-2zM942 210h3v1h-3zM730 163h3v1h-3zM10 227h20v1h-20zM55 227h12v1h-12zM160 227h4v1h-4zM258 227h3v1h-3zM323 227h3v1h-3zM754 166h6v1h-6zM810 166h8v1h-8zM839 166h4v1h-4zM183 218h3v1h-3zM214 218h7v1h-7zM340 218h2v1h-2zM178 220h3v1h-3zM240 220h3v1h-3zM337 220h2v1h-2zM496 92h3v1h-3zM516 92h3v1h-3zM645 92h2v1h-2zM94 230h4v1h-4zM150 230h4v1h-4zM269 230h5v1h-5zM315 230h4v1h-4zM100 232h2v1h-2zM142 232h4v1h-4zM278 232h4v1h-4zM289 232h23v1h-23zM457 82h11v1h-11zM550 82h2v1h-2zM608 82h2v1h-2zM767 169h2v1h-2zM795 169h5v1h-5zM850 169h2v1h-2zM717 158h2v1h-2zM503 94h11v1h-11zM650 94h2v1h-2zM555 80h2v1h-2zM605 80h2v1h-2zM769 170h26v1h-26zM852 170h2v1h-2zM552 81h3v1h-3zM98 231h2v1h-2zM146 231h4v1h-4zM274 231h4v1h-4zM312 231h3v1h-3zM427 86h11v1h-11zM477 86h3v1h-3zM532 86h3v1h-3zM617 86h2v1h-2zM104 234h4v1h-4zM135 234h4v1h-4zM111 236h4v1h-4zM127 236h5v1h-5zM176 221h2v1h-2zM243 221h2v1h-2zM171 223h3v1h-3zM248 223h3v1h-3zM332 223h2v1h-2zM743 165h11v1h-11zM818 165h7v1h-7zM835 165h4v1h-4zM887 203h2v1h-2zM959 203h6v1h-6zM174 222h2v1h-2zM245 222h3v1h-3zM334 222h2v1h-2zM194 215h9v1h-9zM922 215h10v1h-10zM733 164h10v1h-10zM825 164h10v1h-10zM721 160h3v1h-3zM651 95h2v1h-2zM186 217h3v1h-3zM209 217h5v1h-5zM421 88h3v1h-3zM484 88h3v1h-3zM526 88h3v1h-3zM622 88h2v1h-2zM559 78h2v1h-2zM600 78h3v1h-3zM1001 201h7v1h-7zM908 212h6v1h-6zM938 212h2v1h-2zM88 229h6v1h-6zM153 229h4v1h-4zM265 229h4v1h-4zM318 229h3v1h-3zM445 84h6v1h-6zM472 84h2v1h-2zM538 84h9v1h-9zM611 84h3v1h-3zM487 89h3v1h-3zM524 89h2v1h-2zM624 89h6v1h-6zM67 228h21v1h-21zM157 228h3v1h-3zM261 228h4v1h-4zM321 228h2v1h-2zM570 73h3v1h-3zM586 73h2v1h-2zM903 211h5v1h-5zM940 211h2v1h-2zM719 159h2v1h-2zM490 90h4v1h-4zM521 90h3v1h-3zM630 90h9v1h-9zM760 167h4v1h-4zM805 167h6v1h-6zM843 167h3v1h-3zM964 202h37v1h-37zM499 93h4v1h-4zM514 93h2v1h-2zM647 93h3v1h-3zM438 85h7v1h-7zM474 85h3v1h-3zM535 85h4v1h-4zM614 85h3v1h-3zM764 168h3v1h-3zM800 168h5v1h-5zM846 168h4v1h-4zM189 216h5v1h-5zM203 216h6v1h-6zM576 71h5v1h-5zM582 71h2v1h-2zM115 237h12v1h-12zM169 224h2v1h-2zM251 224h2v1h-2zM330 224h2v1h-2zM167 225h2v1h-2zM253 225h3v1h-3zM328 225h2v1h-2zM953 205h3v1h-3zM679 121h2v1h-2zM914 213h4v1h-4zM935 213h3v1h-3zM728 162h2v1h-2zM856 172h2v1h-2zM702 146h2v1h-2zM384 155h2v1h-2zM712 155h2v1h-2zM563 76h2v1h-2zM594 76h4v1h-4zM653 96h2v1h-2zM893 207h3v1h-3zM949 207h2v1h-2zM573 72h3v1h-3zM584 72h2v1h-2zM568 74h2v1h-2zM588 74h3v1h-3zM896 208h2v1h-2zM946 208h3v1h-3zM918 214h4v1h-4zM932 214h3v1h-3zM108 235h3v1h-3zM132 235h3v1h-3zM898 209h3v1h-3zM944 209h2v1h-2zM102 233h2v1h-2zM139 233h3v1h-3zM282 233h7v1h-7zM557 79h2v1h-2zM603 79h2v1h-2zM956 204h3v1h-3zM663 104h2v1h-2zM561 77h2v1h-2zM598 77h2v1h-2zM565 75h3v1h-3zM591 75h3v1h-3zM715 157h2v1h-2zM854 171h2v1h-2zM891 206h2v1h-2zM951 206h2v1h-2zM706 150h2v1h-2zM656 98h2v1h-2zM387 149h1v2h-1zM366 181h1v1h-1zM367 179h1v2h-1zM346 212h1v2h-1zM369 176h1v2h-1zM405 109h1v2h-1zM399 123h1v2h-1zM710 153h1v1h-1zM395 132h1v2h-1zM407 105h1v2h-1zM406 107h1v2h-1zM379 163h1v2h-1zM381 160h1v1h-1zM867 182h1v1h-1zM706 149h1v1h-1zM342 217h1v1h-1zM343 216h1v1h-1zM699 143h1v1h-1zM363 185h1v2h-1zM365 182h1v2h-1zM863 178h1v1h-1zM890 205h1v1h-1zM415 93h1v2h-1zM883 199h1v1h-1zM357 196h1v2h-1zM607 81h1v1h-1zM658 99h1v1h-1zM393 137h1v2h-1zM879 195h1v1h-1zM411 99h1v1h-1zM690 133h1v1h-1zM386 151h1v2h-1zM404 111h1v3h-1zM880 196h1v1h-1zM864 179h1v1h-1zM377 166h1v2h-1zM506 95h1v1h-1zM696 139h1v2h-1zM361 189h1v1h-1zM362 187h1v2h-1zM701 145h1v1h-1zM870 185h1v1h-1zM865 180h1v1h-1zM373 172h1v1h-1zM351 206h1v2h-1zM353 203h1v2h-1zM374 170h1v2h-1zM885 201h1v1h-1zM697 141h1v1h-1zM391 141h1v2h-1zM360 190h1v2h-1zM660 101h1v1h-1zM691 134h1v1h-1zM401 118h1v3h-1zM403 114h1v2h-1zM886 202h1v1h-1zM347 211h1v1h-1zM661 102h1v1h-1zM881 197h1v1h-1zM687 130h1v1h-1zM382 158h1v2h-1zM877 193h1v1h-1zM402 116h1v2h-1zM871 186h1v1h-1zM662 103h1v1h-1zM688 131h1v1h-1zM682 124h1v1h-1zM389 145h1v2h-1zM358 194h1v2h-1zM698 142h1v1h-1zM371 174h1v1h-1zM397 128h1v2h-1zM409 102h1v2h-1zM872 187h1v2h-1zM678 119h1v2h-1zM667 107h1v2h-1zM390 143h1v2h-1zM868 183h1v1h-1zM693 136h1v1h-1zM400 121h1v2h-1zM394 134h1v3h-1zM388 147h1v2h-1zM700 144h1v1h-1zM694 137h1v1h-1zM673 114h1v1h-1zM689 132h1v1h-1zM884 200h1v1h-1zM659 100h1v1h-1zM669 110h1v1h-1zM413 96h1v1h-1zM414 95h1v1h-1zM416 92h1v1h-1zM695 138h1v1h-1zM336 221h1v1h-1zM354 201h1v2h-1zM356 198h1v2h-1zM869 184h1v1h-1zM392 139h1v2h-1zM412 97h1v2h-1zM680 122h1v1h-1zM339 219h1v1h-1zM674 115h1v1h-1zM398 125h1v3h-1zM375 169h1v1h-1zM376 168h1v1h-1zM378 165h1v1h-1zM670 111h1v1h-1zM364 184h1v1h-1zM372 173h1v1h-1zM671 112h1v1h-1zM692 135h1v1h-1zM686 128h1v2h-1zM665 105h1v1h-1zM384 156h1v1h-1zM396 130h1v2h-1zM368 178h1v1h-1zM370 175h1v1h-1zM408 104h1v1h-1zM410 100h1v2h-1zM380 161h1v2h-1zM383 157h1v1h-1zM385 153h1v2h-1zM683 125h1v1h-1zM672 113h1v1h-1zM610 83h1v1h-1zM359 192h1v2h-1zM668 109h1v1h-1zM350 208h1v1h-1zM352 205h1v1h-1zM420 89h1v1h-1zM348 210h1v1h-1zM684 126h1v1h-1zM419 90h1v1h-1zM344 215h1v1h-1zM685 127h1v1h-1zM345 214h1v1h-1zM355 200h1v1h-1zM705 148h1v1h-1zM681 123h1v1h-1zM862 177h1v1h-1zM675 116h1v1h-1zM711 154h1v1h-1zM858 173h1v1h-1zM714 156h1v1h-1zM676 117h1v1h-1zM878 194h1v1h-1zM873 189h1v1h-1zM655 97h1v1h-1zM874 190h1v1h-1zM666 106h1v1h-1zM859 174h1v1h-1zM875 191h1v1h-1zM677 118h1v1h-1zM708 151h1v1h-1zM349 209h1v1h-1zM860 175h1v1h-1zM704 147h1v1h-1zM709 152h1v1h-1zM861 176h1v1h-1zM876 192h1v1h-1zM581 70h1v1h-1zM889 204h1v1h-1zM882 198h1v1h-1zM866 181h1v1h-1z" fill="#ffff00"/>
<path d="M639 82h11v1h-11zM484 91h8v1h-8zM497 91h9v1h-9zM667 91h2v1h-2zM58 226h4v1h-4zM186 226h13v1h-13zM305 226h25v1h-25zM451 120h2v1h-2zM726 129h2v1h-2zM575 83h35v1h-35zM630 83h9v1h-9zM650 83h3v1h-3zM95 229h6v1h-6zM153 229h20v1h-20zM62 227h27v1h-27zM178 227h8v1h-8zM936 198h4v1h-4zM530 84h45v1h-45zM610 84h20v1h-20zM653 84h3v1h-3zM54 225h4v1h-4zM199 225h15v1h-15zM282 225h23v1h-23zM330 225h8v1h-8zM865 176h2v1h-2zM115 232h11v1h-11zM133 232h7v1h-7zM786 165h5v1h-5zM809 165h27v1h-27zM978 207h7v1h-7zM1003 207h5v1h-5zM718 126h2v1h-2zM480 93h2v1h-2zM670 93h2v1h-2zM433 136h2v1h-2zM737 136h2v1h-2zM428 140h2v1h-2zM744 140h2v1h-2zM882 183h3v1h-3zM363 208h2v1h-2zM985 208h18v1h-18zM521 86h4v1h-4zM659 86h2v1h-2zM791 166h18v1h-18zM835 166h4v1h-4zM47 223h3v1h-3zM229 223h12v1h-12zM266 223h8v1h-8zM343 223h2v1h-2zM901 188h6v1h-6zM955 203h6v1h-6zM940 199h3v1h-3zM33 219h4v1h-4zM4 213h6v1h-6zM15 215h5v1h-5zM44 222h3v1h-3zM241 222h10v1h-10zM256 222h10v1h-10zM345 222h3v1h-3zM108 231h7v1h-7zM140 231h7v1h-7zM773 157h2v1h-2zM857 173h3v1h-3zM761 150h2v1h-2zM50 224h4v1h-4zM214 224h15v1h-15zM274 224h8v1h-8zM338 224h6v1h-6zM684 105h2v1h-2zM37 220h3v1h-3zM350 220h2v1h-2zM850 170h3v1h-3zM20 216h5v1h-5zM366 206h2v1h-2zM973 206h5v1h-5zM510 89h3v1h-3zM525 85h5v1h-5zM656 85h3v1h-3zM126 233h7v1h-7zM770 155h2v1h-2zM853 171h2v1h-2zM915 191h3v1h-3zM691 110h2v1h-2zM492 90h5v1h-5zM506 90h4v1h-4zM40 221h4v1h-4zM251 221h5v1h-5zM348 221h2v1h-2zM517 87h4v1h-4zM661 87h2v1h-2zM907 189h4v1h-4zM10 214h5v1h-5zM846 169h4v1h-4zM911 190h4v1h-4zM368 205h2v1h-2zM966 205h7v1h-7zM947 201h3v1h-3zM734 134h2v1h-2zM749 143h2v1h-2zM872 179h3v1h-3zM731 132h2v1h-2zM442 128h2v1h-2zM723 128h3v1h-3zM100 230h8v1h-8zM147 230h7v1h-7zM768 154h2v1h-2zM860 174h2v1h-2zM716 125h2v1h-2zM855 172h2v1h-2zM728 130h2v1h-2zM456 116h2v1h-2zM701 116h2v1h-2zM459 114h2v1h-2zM375 200h2v1h-2zM943 200h4v1h-4zM720 127h3v1h-3zM713 123h2v1h-2zM877 181h3v1h-3zM895 187h7v1h-7zM89 228h6v1h-6zM173 228h5v1h-5zM29 218h4v1h-4zM870 178h2v1h-2zM918 192h4v1h-4zM25 217h4v1h-4zM765 152h2v1h-2zM758 148h2v1h-2zM862 175h3v1h-3zM513 88h4v1h-4zM663 88h2v1h-2zM687 107h2v1h-2zM875 180h2v1h-2zM922 193h4v1h-4zM867 177h3v1h-3zM950 202h5v1h-5zM370 204h2v1h-2zM961 204h5v1h-5zM839 167h3v1h-3zM479 94h2v1h-2zM671 94h2v1h-2zM784 164h2v1h-2zM885 184h3v1h-3zM704 118h2v1h-2zM706 119h2v1h-2zM929 195h2v1h-2zM745 141h2v1h-2zM931 196h3v1h-3zM753 145h2v1h-2zM891 186h4v1h-4zM740 138h2v1h-2zM694 112h2v1h-2zM934 197h2v1h-2zM699 115h2v1h-2zM926 194h3v1h-3zM742 139h2v1h-2zM888 185h3v1h-3zM0 212h4v1h-4zM778 160h2v1h-2zM775 158h2v1h-2zM696 113h2v1h-2zM842 168h4v1h-4zM711 122h2v1h-2zM880 182h2v1h-2zM755 146h2v1h-2zM763 151h2v1h-2zM482 92h2v1h-2zM709 121h2v1h-2zM751 144h2v1h-2zM680 102h2v1h-2zM747 142h2v1h-2zM781 162h2v1h-2zM760 149h2v1h-2zM677 100h2v1h-2zM365 207h1v1h-1zM400 173h1v2h-1zM441 129h1v1h-1zM412 157h1v1h-1zM447 124h1v1h-1zM730 131h1v1h-1zM378 198h1v1h-1zM398 176h1v2h-1zM397 178h1v2h-1zM679 101h1v1h-1zM472 101h1v1h-1zM440 130h1v1h-1zM410 159h1v2h-1zM445 126h1v1h-1zM409 161h1v1h-1zM408 162h1v1h-1zM675 97h1v1h-1zM392 184h1v1h-1zM393 183h1v1h-1zM686 106h1v1h-1zM470 103h1v1h-1zM405 166h1v1h-1zM407 163h1v2h-1zM478 95h1v1h-1zM427 141h1v1h-1zM676 98h1v1h-1zM391 185h1v1h-1zM401 171h1v2h-1zM403 168h1v2h-1zM431 138h1v1h-1zM418 150h1v1h-1zM460 113h1v1h-1zM677 99h1v1h-1zM468 105h1v1h-1zM417 151h1v2h-1zM380 196h1v1h-1zM388 188h1v1h-1zM458 115h1v1h-1zM466 107h1v1h-1zM413 156h1v1h-1zM703 117h1v1h-1zM423 145h1v1h-1zM379 197h1v1h-1zM386 190h1v1h-1zM399 175h1v1h-1zM411 158h1v1h-1zM446 125h1v1h-1zM377 199h1v1h-1zM385 191h1v1h-1zM372 203h1v1h-1zM358 213h1v1h-1zM444 127h1v1h-1zM359 212h1v1h-1zM439 131h1v1h-1zM356 215h1v1h-1zM357 214h1v1h-1zM477 96h1v1h-1zM432 137h1v1h-1zM437 133h1v1h-1zM669 92h1v1h-1zM438 132h1v1h-1zM780 161h1v1h-1zM757 147h1v1h-1zM693 111h1v1h-1zM436 134h1v1h-1zM425 143h1v1h-1zM708 120h1v1h-1zM426 142h1v1h-1zM389 187h1v1h-1zM467 106h1v1h-1zM435 135h1v1h-1zM475 98h1v1h-1zM424 144h1v1h-1zM387 189h1v1h-1zM430 139h1v1h-1zM395 181h1v1h-1zM465 108h1v1h-1zM352 219h1v1h-1zM733 133h1v1h-1zM473 100h1v1h-1zM682 103h1v1h-1zM618 85h1v1h-1zM402 170h1v1h-1zM698 114h1v1h-1zM690 109h1v1h-1zM665 89h1v1h-1zM414 155h1v1h-1zM383 193h1v1h-1zM461 112h1v1h-1zM450 121h1v1h-1zM416 153h1v1h-1zM381 195h1v1h-1zM673 95h1v1h-1zM354 217h1v1h-1zM355 216h1v1h-1zM476 97h1v1h-1zM448 123h1v1h-1zM449 122h1v1h-1zM396 180h1v1h-1zM353 218h1v1h-1zM474 99h1v1h-1zM394 182h1v1h-1zM736 135h1v1h-1zM674 96h1v1h-1zM406 165h1v1h-1zM739 137h1v1h-1zM767 153h1v1h-1zM715 124h1v1h-1zM422 146h1v1h-1zM683 104h1v1h-1zM463 110h1v1h-1zM464 109h1v1h-1zM471 102h1v1h-1zM420 148h1v1h-1zM689 108h1v1h-1zM421 147h1v1h-1zM384 192h1v1h-1zM462 111h1v1h-1zM469 104h1v1h-1zM404 167h1v1h-1zM419 149h1v1h-1zM382 194h1v1h-1zM390 186h1v1h-1zM666 90h1v1h-1zM783 163h1v1h-1zM777 159h1v1h-1zM415 154h1v1h-1zM455 117h1v1h-1zM361 210h1v1h-1zM362 209h1v1h-1zM453 119h1v1h-1zM454 118h1v1h-1zM772 156h1v1h-1zM373 202h1v1h-1zM374 201h1v1h-1zM360 211h1v1h-1z" fill="#ee82ee"/>
<path d="M480 136h2v1h-2zM774 136h3v1h-3zM111 226h6v1h-6zM180 226h37v1h-37zM256 226h19v1h-19zM289 226h6v1h-6zM440 164h2v1h-2zM850 164h2v1h-2zM486 132h2v1h-2zM766 132h2v1h-2zM94 222h5v1h-5zM323 222h13v1h-13zM783 140h3v1h-3zM103 224h4v1h-4zM302 224h10v1h-10zM117 227h10v1h-10zM173 227h8v1h-8zM275 227h14v1h-14zM67 218h10v1h-10zM351 218h2v1h-2zM560 86h3v1h-3zM631 86h17v1h-17zM1002 198h5v1h-5zM768 133h2v1h-2zM491 129h2v1h-2zM760 129h2v1h-2zM27 211h6v1h-6zM366 211h2v1h-2zM590 82h15v1h-15zM39 213h5v1h-5zM362 213h2v1h-2zM0 209h22v1h-22zM370 209h2v1h-2zM107 225h4v1h-4zM217 225h39v1h-39zM295 225h7v1h-7zM933 188h7v1h-7zM408 184h2v1h-2zM914 184h5v1h-5zM541 95h2v1h-2zM678 95h2v1h-2zM483 134h2v1h-2zM770 134h2v1h-2zM463 149h2v1h-2zM812 149h3v1h-3zM489 130h2v1h-2zM762 130h2v1h-2zM563 85h5v1h-5zM622 85h9v1h-9zM556 87h4v1h-4zM648 87h9v1h-9zM127 228h20v1h-20zM158 228h15v1h-15zM54 216h5v1h-5zM356 216h2v1h-2zM399 191h2v1h-2zM955 191h11v1h-11zM756 127h2v1h-2zM919 185h4v1h-4zM748 123h2v1h-2zM413 181h2v1h-2zM900 181h5v1h-5zM815 150h3v1h-3zM147 229h11v1h-11zM389 199h2v1h-2zM376 206h2v1h-2zM420 176h2v1h-2zM881 176h4v1h-4zM966 192h8v1h-8zM411 182h2v1h-2zM905 182h5v1h-5zM83 220h6v1h-6zM342 220h7v1h-7zM404 187h2v1h-2zM928 187h5v1h-5zM393 196h2v1h-2zM990 196h6v1h-6zM99 223h4v1h-4zM312 223h11v1h-11zM741 119h2v1h-2zM974 193h6v1h-6zM789 142h2v1h-2zM752 125h2v1h-2zM436 166h2v1h-2zM854 166h2v1h-2zM578 83h12v1h-12zM605 83h8v1h-8zM532 101h2v1h-2zM691 101h3v1h-3zM818 151h4v1h-4zM568 84h10v1h-10zM613 84h9v1h-9zM516 113h2v1h-2zM729 113h2v1h-2zM735 116h2v1h-2zM833 156h3v1h-3zM684 98h2v1h-2zM675 94h3v1h-3zM59 217h8v1h-8zM353 217h3v1h-3zM503 121h2v1h-2zM744 121h2v1h-2zM520 110h2v1h-2zM722 110h2v1h-2zM510 117h2v1h-2zM737 117h2v1h-2zM878 175h3v1h-3zM49 215h5v1h-5zM358 215h2v1h-2zM791 143h3v1h-3zM552 89h2v1h-2zM661 89h4v1h-4zM44 214h5v1h-5zM360 214h2v1h-2zM940 189h8v1h-8zM680 96h2v1h-2zM77 219h6v1h-6zM348 219h3v1h-3zM513 115h3v1h-3zM733 115h2v1h-2zM724 111h3v1h-3zM372 208h2v1h-2zM948 190h7v1h-7zM715 108h4v1h-4zM996 197h6v1h-6zM22 210h5v1h-5zM368 210h2v1h-2zM33 212h6v1h-6zM364 212h2v1h-2zM535 99h2v1h-2zM686 99h2v1h-2zM446 161h2v1h-2zM844 161h2v1h-2zM697 103h4v1h-4zM825 153h3v1h-3zM923 186h5v1h-5zM980 194h5v1h-5zM524 107h2v1h-2zM711 107h4v1h-4zM442 163h2v1h-2zM848 163h2v1h-2zM473 141h2v1h-2zM786 141h3v1h-3zM885 177h3v1h-3zM438 165h2v1h-2zM852 165h2v1h-2zM430 169h2v1h-2zM860 169h3v1h-3zM496 126h2v1h-2zM754 126h2v1h-2zM528 104h2v1h-2zM701 104h3v1h-3zM798 145h3v1h-3zM455 155h2v1h-2zM830 155h3v1h-3zM805 147h3v1h-3zM89 221h5v1h-5zM335 221h7v1h-7zM459 152h2v1h-2zM822 152h3v1h-3zM467 146h2v1h-2zM801 146h4v1h-4zM434 167h2v1h-2zM856 167h2v1h-2zM888 178h4v1h-4zM871 173h3v1h-3zM985 195h5v1h-5zM794 144h4v1h-4zM910 183h4v1h-4zM449 159h2v1h-2zM840 159h2v1h-2zM428 170h2v1h-2zM863 170h3v1h-3zM842 160h2v1h-2zM477 138h2v1h-2zM779 138h2v1h-2zM426 171h2v1h-2zM865 171h3v1h-3zM493 128h2v1h-2zM758 128h2v1h-2zM452 157h2v1h-2zM836 157h2v1h-2zM868 172h3v1h-3zM387 200h2v1h-2zM554 88h2v1h-2zM657 88h4v1h-4zM415 180h2v1h-2zM895 180h5v1h-5zM704 105h4v1h-4zM708 106h3v1h-3zM892 179h3v1h-3zM538 97h2v1h-2zM682 97h2v1h-2zM874 174h4v1h-4zM544 93h2v1h-2zM673 93h2v1h-2zM764 131h2v1h-2zM731 114h2v1h-2zM550 90h2v1h-2zM665 90h3v1h-3zM808 148h4v1h-4zM719 109h3v1h-3zM499 124h2v1h-2zM750 124h2v1h-2zM548 91h2v1h-2zM668 91h2v1h-2zM444 162h2v1h-2zM846 162h2v1h-2zM828 154h2v1h-2zM546 92h2v1h-2zM670 92h3v1h-3zM746 122h2v1h-2zM694 102h3v1h-3zM534 100h2v1h-2zM688 100h3v1h-3zM777 137h2v1h-2zM772 135h2v1h-2zM385 201h2v1h-2zM432 168h2v1h-2zM858 168h2v1h-2zM382 203h2v1h-2zM727 112h2v1h-2zM378 205h2v1h-2zM508 118h2v1h-2zM739 118h2v1h-2zM838 158h2v1h-2zM374 207h2v1h-2zM505 120h2v1h-2zM781 139h2v1h-2zM380 204h2v1h-2zM392 197h1v1h-1zM512 116h1v1h-1zM1007 199h1v1h-1zM469 145h1v1h-1zM470 144h1v1h-1zM526 106h1v1h-1zM531 102h1v1h-1zM475 140h1v1h-1zM488 131h1v1h-1zM451 158h1v1h-1zM384 202h1v1h-1zM402 189h1v1h-1zM391 198h1v1h-1zM406 186h1v1h-1zM397 193h1v1h-1zM407 185h1v1h-1zM495 127h1v1h-1zM425 172h1v1h-1zM479 137h1v1h-1zM396 194h1v1h-1zM530 103h1v1h-1zM543 94h1v1h-1zM515 114h1v1h-1zM401 190h1v1h-1zM419 177h1v1h-1zM507 119h1v1h-1zM395 195h1v1h-1zM410 183h1v1h-1zM498 125h1v1h-1zM482 135h1v1h-1zM424 173h1v1h-1zM454 156h1v1h-1zM418 178h1v1h-1zM519 111h1v1h-1zM458 153h1v1h-1zM423 174h1v1h-1zM457 154h1v1h-1zM417 179h1v1h-1zM502 122h1v1h-1zM462 150h1v1h-1zM537 98h1v1h-1zM448 160h1v1h-1zM422 175h1v1h-1zM523 108h1v1h-1zM501 123h1v1h-1zM527 105h1v1h-1zM518 112h1v1h-1zM472 142h1v1h-1zM461 151h1v1h-1zM522 109h1v1h-1zM466 147h1v1h-1zM485 133h1v1h-1zM465 148h1v1h-1zM540 96h1v1h-1zM471 143h1v1h-1zM743 120h1v1h-1zM398 192h1v1h-1zM403 188h1v1h-1zM476 139h1v1h-1z" fill="#00e600"/>
<path d="M187 217h33v1h-33zM373 217h4v1h-4zM529 165h2v1h-2zM983 165h3v1h-3zM659 123h5v1h-5zM840 123h4v1h-4zM581 145h4v1h-4zM917 145h4v1h-4zM145 225h5v1h-5zM318 225h28v1h-28zM547 156h3v1h-3zM956 156h4v1h-4zM617 135h3v1h-3zM883 135h4v1h-4zM168 221h5v1h-5zM256 221h17v1h-17zM359 221h3v1h-3zM642 127h4v1h-4zM854 127h4v1h-4zM535 162h2v1h-2zM975 162h2v1h-2zM461 188h2v1h-2zM599 140h3v1h-3zM898 140h4v1h-4zM178 219h4v1h-4zM239 219h8v1h-8zM366 219h3v1h-3zM741 110h38v1h-38zM626 132h3v1h-3zM872 132h4v1h-4zM73 229h55v1h-55zM494 177h5v1h-5zM539 160h2v1h-2zM969 160h3v1h-3zM0 227h19v1h-19zM134 227h6v1h-6zM685 118h6v1h-6zM822 118h4v1h-4zM533 163h2v1h-2zM977 163h3v1h-3zM519 169h3v1h-3zM996 169h3v1h-3zM432 197h4v1h-4zM649 125h5v1h-5zM847 125h4v1h-4zM680 119h5v1h-5zM826 119h3v1h-3zM416 202h3v1h-3zM723 112h11v1h-11zM787 112h8v1h-8zM553 154h3v1h-3zM949 154h4v1h-4zM182 218h5v1h-5zM220 218h19v1h-19zM369 218h4v1h-4zM629 131h3v1h-3zM869 131h3v1h-3zM701 115h6v1h-6zM810 115h4v1h-4zM578 146h3v1h-3zM921 146h4v1h-4zM384 214h3v1h-3zM606 138h4v1h-4zM892 138h3v1h-3zM19 228h54v1h-54zM128 228h6v1h-6zM588 143h3v1h-3zM909 143h4v1h-4zM646 126h3v1h-3zM851 126h3v1h-3zM155 223h6v1h-6zM281 223h17v1h-17zM350 223h6v1h-6zM595 141h4v1h-4zM902 141h4v1h-4zM550 155h3v1h-3zM953 155h3v1h-3zM400 208h3v1h-3zM449 192h3v1h-3zM575 147h3v1h-3zM925 147h4v1h-4zM707 114h8v1h-8zM802 114h8v1h-8zM653 124h6v1h-6zM844 124h3v1h-3zM733 111h8v1h-8zM779 111h8v1h-8zM635 129h3v1h-3zM862 129h3v1h-3zM531 164h2v1h-2zM980 164h3v1h-3zM421 200h4v1h-4zM559 152h3v1h-3zM943 152h3v1h-3zM173 220h5v1h-5zM247 220h9v1h-9zM362 220h4v1h-4zM161 222h7v1h-7zM273 222h8v1h-8zM355 222h4v1h-4zM591 142h4v1h-4zM906 142h3v1h-3zM478 182h3v1h-3zM150 224h5v1h-5zM298 224h20v1h-20zM345 224h5v1h-5zM508 173h3v1h-3zM489 178h5v1h-5zM405 206h3v1h-3zM455 190h4v1h-4zM439 195h3v1h-3zM527 166h2v1h-2zM986 166h3v1h-3zM715 113h8v1h-8zM795 113h7v1h-7zM389 212h3v1h-3zM514 171h2v1h-2zM1004 171h4v1h-4zM623 133h3v1h-3zM876 133h4v1h-4zM572 148h3v1h-3zM929 148h3v1h-3zM445 193h4v1h-4zM638 128h4v1h-4zM858 128h4v1h-4zM675 120h6v1h-6zM829 120h4v1h-4zM469 185h3v1h-3zM669 121h6v1h-6zM833 121h4v1h-4zM395 210h2v1h-2zM568 149h4v1h-4zM932 149h4v1h-4zM524 167h3v1h-3zM989 167h4v1h-4zM602 139h4v1h-4zM895 139h3v1h-3zM613 136h4v1h-4zM887 136h3v1h-3zM452 191h3v1h-3zM377 216h4v1h-4zM499 176h3v1h-3zM691 117h5v1h-5zM818 117h4v1h-4zM543 158h2v1h-2zM963 158h3v1h-3zM522 168h2v1h-2zM993 168h3v1h-3zM140 226h5v1h-5zM429 198h3v1h-3zM545 157h2v1h-2zM960 157h3v1h-3zM696 116h5v1h-5zM814 116h4v1h-4zM541 159h2v1h-2zM966 159h3v1h-3zM463 187h3v1h-3zM505 174h3v1h-3zM486 179h3v1h-3zM664 122h5v1h-5zM837 122h3v1h-3zM556 153h3v1h-3zM946 153h3v1h-3zM585 144h3v1h-3zM913 144h4v1h-4zM565 150h3v1h-3zM936 150h3v1h-3zM632 130h3v1h-3zM865 130h4v1h-4zM475 183h3v1h-3zM516 170h3v1h-3zM999 170h5v1h-5zM403 207h2v1h-2zM610 137h3v1h-3zM890 137h2v1h-2zM458 189h3v1h-3zM436 196h3v1h-3zM481 181h3v1h-3zM537 161h2v1h-2zM972 161h3v1h-3zM387 213h2v1h-2zM408 205h3v1h-3zM413 203h3v1h-3zM562 151h3v1h-3zM939 151h4v1h-4zM381 215h3v1h-3zM511 172h3v1h-3zM425 199h4v1h-4zM419 201h3v1h-3zM397 209h3v1h-3zM502 175h3v1h-3zM466 186h3v1h-3zM472 184h3v1h-3zM484 180h2v1h-2zM411 204h2v1h-2zM620 134h3v1h-3zM880 134h3v1h-3zM442 194h3v1h-3zM392 211h3v1h-3zM120 230h1v1h-1z" fill="#00dcff"/>
</g>
<g font-family="'Liberation Sans','Noto Sans CJK SC',sans-serif" font-size="12.5" fill="#c8c8c8">
<path d="M407 16H419V17H407zM406.7 16.5l3.6-2.2v4.4z" fill="#c0c0c0"/>
<text x="420.8" y="21.2" textLength="30" lengthAdjust="spacingAndGlyphs">16.56</text>
<path d="M92 250H104V251H92zM91.7 250.5l3.6-2.2v4.4z" fill="#c0c0c0"/>
<text x="105.2" y="254.8" textLength="22.5" lengthAdjust="spacingAndGlyphs">8.51</text>
</g>
<g font-family="'Liberation Sans','Noto Sans CJK SC',sans-serif" font-size="12.5" fill="#ff3232">
<text x="1031.2" y="8.7">14.00</text>
<text x="1031.2" y="95.2">14.00</text>
<text x="1031.2" y="181.7">14.00</text>
<text x="1031.2" y="203.5">10.15</text>
</g>
<g font-family="'Liberation Sans','Noto Sans CJK SC',sans-serif" font-size="12">
<rect x="379" y="249" width="13" height="14" fill="#800000"/>
<text x="379.5" y="260.3" fill="#ffffff">榜</text>
<rect x="512" y="249" width="13" height="14" fill="#800000"/>
<text x="512.5" y="260.3" fill="#ffffff">涨</text>
<rect x="624" y="249" width="13" height="14" fill="#800000"/>
<text x="624.5" y="260.3" fill="#ffffff">财</text>
<rect x="848" y="249" width="13" height="14" fill="#800000"/>
<text x="848.5" y="260.3" fill="#ffffff">港</text>
</g>
<g font-family="'Liberation Sans','Noto Sans CJK SC',sans-serif" font-size="14" fill="#00e5ff" stroke="#00e5ff" stroke-width="0.3"><text x="856.8" y="261">L</text><text x="941.2" y="261">L</text></g>
<text font-family="'Liberation Sans','Noto Sans CJK SC',sans-serif" font-size="12" fill="#ffff00" x="-4.5" y="279.9">高度控盘: +0</text>
<text font-family="'Liberation Sans','Noto Sans CJK SC',sans-serif" font-size="12" fill="#c8c8c8" x="971" y="280.2">指标说明</text>
<g font-family="'Liberation Sans','Noto Sans CJK SC',sans-serif" font-size="12" >
<text x="1030.4" y="290.1" fill="#ff3232">+1.00</text>
<text x="1030.4" y="330.1" fill="#ff3232">+1.00</text>
<text x="1030.4" y="370.1" fill="#ff3232">+1.00</text>
<text x="1030.4" y="411.1" fill="#ff3232">+1.00</text>
<text x="1030.4" y="451.1" fill="#ff3232">+1.00</text>
<text x="1029.7" y="491.8" fill="#00e000">-4.00</text>
<text x="1029.7" y="531.8" fill="#00e000">-1.00</text>
</g>
<g shape-rendering="crispEdges">
<polygon points="129.6,478.5 133.1,473.2 137.5,468.0 141.9,463.6 146.2,460.5 150.6,456.2 154.5,453.1 161.1,453.1 168.1,453.1 175.1,452.2 179.4,450.1 183.0,448.3 188.2,448.3 192.6,448.7 192.6,449.2 186.4,449.2 181.2,450.5 176.0,452.9 168.0,454.0 161.0,456.2 155.0,459.2 149.7,463.6 145.0,467.5 140.0,472.0 135.0,476.5 130.5,479.8 129.6,480.0" fill="#ff0000" stroke="#ff0000" stroke-width="0.4" stroke-linejoin="round"/>
<polygon points="289.3,472.6 298.5,468.4 306.8,465.0 315.2,459.2 320.0,457.6 328.4,451.7 335.8,451.0 340.0,445.0 345.0,434.2 350.0,420.0 355.0,405.9 360.0,386.7 361.7,373.0 366.7,361.4 375.0,349.7 383.4,338.0 392.6,326.4 397.0,314.7 400.9,303.0 404.2,293.0 405.9,285.2 414.0,285.2 420.0,288.8 424.3,291.0 424.3,291.0 418.0,289.5 412.6,293.0 405.9,303.0 401.7,314.7 396.7,326.4 390.9,338.0 384.2,349.7 378.4,361.4 373.4,373.0 364.2,390.0 360.0,400.9 355.0,415.9 350.0,430.9 345.0,441.7 340.0,449.2 335.8,452.0 328.4,455.0 320.0,460.9 315.2,464.2 306.8,468.4 298.5,470.9 289.3,473.7" fill="#ff0000" stroke="#ff0000" stroke-width="0.4" stroke-linejoin="round"/>
<polygon points="521.7,359.2 526.7,355.0 533.4,353.0 538.4,348.0 541.7,347.0 546.7,347.5 551.0,350.2 551.0,350.6 546.7,350.0 541.7,350.9 538.4,351.7 533.4,355.9 526.7,358.4 521.7,360.9" fill="#ff0000" stroke="#ff0000" stroke-width="0.4" stroke-linejoin="round"/>
<polygon points="772.6,523.0 778.5,519.2 785.0,515.9 791.8,509.2 798.5,504.2 806.7,499.7 813.3,497.0 820.0,497.0 827.5,498.0 827.5,498.7 820.0,499.2 813.3,500.0 806.7,503.4 798.5,508.4 791.8,514.2 785.0,519.2 778.5,521.7 772.6,523.7" fill="#ff0000" stroke="#ff0000" stroke-width="0.4" stroke-linejoin="round"/>
<polygon points="898.4,550.9 908.4,544.2 916.8,535.9 923.5,533.4 931.8,530.0 938.5,529.2 945.0,525.0 951.8,518.7 958.5,515.0 963.6,510.4 971.6,507.8 980.9,509.0 986.2,509.2 986.2,509.8 980.9,510.4 971.6,511.8 963.6,515.0 958.5,517.5 951.8,521.7 945.0,528.4 938.5,531.7 931.8,532.5 923.5,537.5 916.8,540.9 908.4,546.7 898.4,551.7" fill="#ff0000" stroke="#ff0000" stroke-width="0.4" stroke-linejoin="round"/>
<polygon points="989.5,508.0 991.5,506.4 1000.8,505.0 1008.3,505.0 1008.3,505.8 1000.8,506.4 991.5,508.3 989.5,508.8" fill="#ff0000" stroke="#ff0000" stroke-width="0.4" stroke-linejoin="round"/>
<path d="M35 464h4v1h-4z" fill="#ff0000"/>
</g>
<g shape-rendering="crispEdges">
<rect x="0" y="463" width="1" height="22" fill="#00ff00"/>
<rect x="7" y="463" width="1" height="21" fill="#ff00ff"/>
<rect x="14" y="463" width="1" height="20" fill="#ff00ff"/>
<rect x="21" y="463" width="1" height="19" fill="#ff00ff"/>
<rect x="28" y="463" width="1" height="16" fill="#ff00ff"/>
<rect x="35" y="463" width="1" height="13" fill="#ff00ff"/>
<rect x="42" y="463" width="1" height="15" fill="#00ff00"/>
<rect x="49" y="463" width="1" height="15" fill="#ff00ff"/>
<rect x="56" y="463" width="1" height="15" fill="#00ff00"/>
<rect x="63" y="463" width="1" height="16" fill="#00ff00"/>
<rect x="70" y="463" width="1" height="14" fill="#ff00ff"/>
<rect x="77" y="463" width="1" height="13" fill="#ff00ff"/>
<rect x="84" y="463" width="1" height="13" fill="#ff00ff"/>
<rect x="91" y="463" width="1" height="15" fill="#00ff00"/>
<rect x="98" y="463" width="1" height="18" fill="#00ff00"/>
<rect x="105" y="463" width="1" height="21" fill="#00ff00"/>
<rect x="112" y="463" width="1" height="24" fill="#00ff00"/>
<rect x="119" y="463" width="1" height="25" fill="#00ff00"/>
<rect x="126" y="463" width="1" height="23" fill="#ff00ff"/>
<rect x="133" y="463" width="1" height="9" fill="#ff00ff"/>
<rect x="147" y="454" width="1" height="7" fill="#ff0000"/>
<rect x="154" y="448" width="1" height="13" fill="#ff0000"/>
<rect x="161" y="448" width="1" height="13" fill="#00ffff"/>
<rect x="168" y="448" width="1" height="13" fill="#ff0000"/>
<rect x="175" y="448" width="1" height="13" fill="#00ffff"/>
<rect x="182" y="444" width="1" height="17" fill="#ff0000"/>
<rect x="189" y="445" width="1" height="16" fill="#00ffff"/>
<rect x="196" y="448" width="1" height="13" fill="#00ffff"/>
<rect x="203" y="450" width="1" height="11" fill="#00ffff"/>
<rect x="210" y="452" width="1" height="9" fill="#00ffff"/>
<rect x="217" y="455" width="1" height="6" fill="#00ffff"/>
<rect x="224" y="457" width="1" height="4" fill="#00ffff"/>
<rect x="231" y="457" width="1" height="4" fill="#ff0000"/>
<rect x="238" y="460" width="1" height="1" fill="#00ffff"/>
<rect x="245" y="463" width="1" height="2" fill="#00ff00"/>
<rect x="252" y="463" width="1" height="8" fill="#00ff00"/>
<rect x="259" y="463" width="1" height="13" fill="#00ff00"/>
<rect x="266" y="463" width="1" height="18" fill="#00ff00"/>
<rect x="273" y="463" width="1" height="19" fill="#00ff00"/>
<rect x="280" y="463" width="1" height="17" fill="#ff00ff"/>
<rect x="287" y="463" width="1" height="15" fill="#ff00ff"/>
<rect x="294" y="463" width="1" height="7" fill="#ff00ff"/>
<rect x="301" y="463" width="1" height="4" fill="#ff00ff"/>
<rect x="308" y="463" width="1" height="2" fill="#ff00ff"/>
<rect x="315" y="458" width="1" height="3" fill="#ff0000"/>
<rect x="322" y="452" width="1" height="9" fill="#ff0000"/>
<rect x="329" y="448" width="1" height="13" fill="#ff0000"/>
<rect x="336" y="447" width="1" height="14" fill="#ff0000"/>
<rect x="343" y="434" width="1" height="27" fill="#ff0000"/>
<rect x="350" y="413" width="1" height="48" fill="#ff0000"/>
<rect x="357" y="386" width="1" height="75" fill="#ff0000"/>
<rect x="364" y="354" width="1" height="107" fill="#ff0000"/>
<rect x="371" y="350" width="1" height="111" fill="#ff0000"/>
<rect x="378" y="347" width="1" height="114" fill="#ff0000"/>
<rect x="385" y="345" width="1" height="116" fill="#ff0000"/>
<rect x="392" y="340" width="1" height="121" fill="#ff0000"/>
<rect x="399" y="328" width="1" height="133" fill="#ff0000"/>
<rect x="406" y="314" width="1" height="147" fill="#ff0000"/>
<rect x="413" y="324" width="1" height="137" fill="#00ffff"/>
<rect x="420" y="337" width="1" height="124" fill="#00ffff"/>
<rect x="427" y="347" width="1" height="114" fill="#00ffff"/>
<rect x="434" y="362" width="1" height="99" fill="#00ffff"/>
<rect x="441" y="380" width="1" height="81" fill="#00ffff"/>
<rect x="448" y="391" width="1" height="70" fill="#00ffff"/>
<rect x="455" y="399" width="1" height="62" fill="#00ffff"/>
<rect x="462" y="405" width="1" height="56" fill="#00ffff"/>
<rect x="469" y="406" width="1" height="55" fill="#00ffff"/>
<rect x="476" y="407" width="1" height="54" fill="#00ffff"/>
<rect x="483" y="413" width="1" height="48" fill="#00ffff"/>
<rect x="490" y="425" width="1" height="36" fill="#00ffff"/>
<rect x="497" y="437" width="1" height="24" fill="#00ffff"/>
<rect x="504" y="442" width="1" height="19" fill="#00ffff"/>
<rect x="511" y="448" width="1" height="13" fill="#00ffff"/>
<rect x="518" y="441" width="1" height="20" fill="#ff0000"/>
<rect x="525" y="435" width="1" height="26" fill="#ff0000"/>
<rect x="532" y="433" width="1" height="28" fill="#ff0000"/>
<rect x="539" y="428" width="1" height="33" fill="#ff0000"/>
<rect x="546" y="428" width="1" height="33" fill="#00ffff"/>
<rect x="553" y="432" width="1" height="29" fill="#00ffff"/>
<rect x="560" y="433" width="1" height="28" fill="#00ffff"/>
<rect x="567" y="437" width="1" height="24" fill="#00ffff"/>
<rect x="574" y="444" width="1" height="17" fill="#00ffff"/>
<rect x="581" y="448" width="1" height="13" fill="#00ffff"/>
<rect x="588" y="454" width="1" height="7" fill="#00ffff"/>
<rect x="595" y="456" width="1" height="5" fill="#00ffff"/>
<rect x="602" y="459" width="1" height="2" fill="#00ffff"/>
<rect x="609" y="463" width="1" height="1" fill="#00ff00"/>
<rect x="616" y="463" width="1" height="4" fill="#00ff00"/>
<rect x="623" y="463" width="1" height="7" fill="#00ff00"/>
<rect x="630" y="463" width="1" height="5" fill="#ff00ff"/>
<rect x="637" y="463" width="1" height="4" fill="#ff00ff"/>
<rect x="644" y="463" width="1" height="6" fill="#00ff00"/>
<rect x="651" y="463" width="1" height="11" fill="#00ff00"/>
<rect x="658" y="463" width="1" height="24" fill="#00ff00"/>
<rect x="665" y="463" width="1" height="33" fill="#00ff00"/>
<rect x="672" y="463" width="1" height="48" fill="#00ff00"/>
<rect x="679" y="463" width="1" height="56" fill="#00ff00"/>
<rect x="686" y="463" width="1" height="62" fill="#00ff00"/>
<rect x="693" y="463" width="1" height="64" fill="#00ff00"/>
<rect x="700" y="463" width="1" height="60" fill="#ff00ff"/>
<rect x="707" y="463" width="1" height="59" fill="#ff00ff"/>
<rect x="714" y="463" width="1" height="57" fill="#ff00ff"/>
<rect x="721" y="463" width="1" height="54" fill="#ff00ff"/>
<rect x="728" y="463" width="1" height="51" fill="#ff00ff"/>
<rect x="735" y="463" width="1" height="52" fill="#00ff00"/>
<rect x="742" y="463" width="1" height="52" fill="#ff00ff"/>
<rect x="749" y="463" width="1" height="51" fill="#ff00ff"/>
<rect x="756" y="463" width="1" height="51" fill="#00ff00"/>
<rect x="763" y="463" width="1" height="50" fill="#ff00ff"/>
<rect x="770" y="463" width="1" height="48" fill="#ff00ff"/>
<rect x="777" y="463" width="1" height="40" fill="#ff00ff"/>
<rect x="784" y="463" width="1" height="35" fill="#ff00ff"/>
<rect x="791" y="463" width="1" height="27" fill="#ff00ff"/>
<rect x="798" y="463" width="1" height="21" fill="#ff00ff"/>
<rect x="805" y="463" width="1" height="17" fill="#ff00ff"/>
<rect x="812" y="463" width="1" height="13" fill="#ff00ff"/>
<rect x="819" y="463" width="1" height="12" fill="#ff00ff"/>
<rect x="826" y="463" width="1" height="12" fill="#ff00ff"/>
<rect x="833" y="463" width="1" height="16" fill="#00ff00"/>
<rect x="840" y="463" width="1" height="25" fill="#00ff00"/>
<rect x="847" y="463" width="1" height="25" fill="#00ff00"/>
<rect x="854" y="463" width="1" height="27" fill="#00ff00"/>
<rect x="861" y="463" width="1" height="35" fill="#00ff00"/>
<rect x="868" y="463" width="1" height="46" fill="#00ff00"/>
<rect x="875" y="463" width="1" height="55" fill="#00ff00"/>
<rect x="882" y="463" width="1" height="62" fill="#00ff00"/>
<rect x="889" y="463" width="1" height="65" fill="#00ff00"/>
<rect x="896" y="463" width="1" height="59" fill="#ff00ff"/>
<rect x="903" y="463" width="1" height="52" fill="#ff00ff"/>
<rect x="910" y="463" width="1" height="46" fill="#ff00ff"/>
<rect x="917" y="463" width="1" height="37" fill="#ff00ff"/>
<rect x="924" y="463" width="1" height="34" fill="#ff00ff"/>
<rect x="931" y="463" width="1" height="31" fill="#ff00ff"/>
<rect x="938" y="463" width="1" height="29" fill="#ff00ff"/>
<rect x="945" y="463" width="1" height="23" fill="#ff00ff"/>
<rect x="952" y="463" width="1" height="16" fill="#ff00ff"/>
<rect x="959" y="463" width="1" height="13" fill="#ff00ff"/>
<rect x="966" y="463" width="1" height="8" fill="#ff00ff"/>
<rect x="973" y="463" width="1" height="7" fill="#ff00ff"/>
<rect x="980" y="463" width="1" height="8" fill="#00ff00"/>
<rect x="987" y="463" width="1" height="8" fill="#00ff00"/>
<rect x="994" y="463" width="1" height="7" fill="#ff00ff"/>
<rect x="1001" y="463" width="1" height="7" fill="#ff00ff"/>
<rect x="1008" y="463" width="1" height="6" fill="#ff00ff"/>
</g>
<g font-family="'Liberation Sans','Noto Sans CJK SC',sans-serif" font-size="12" fill="#ffffff">
<rect x="77" y="469" width="36" height="12" fill="#000"/><rect x="287" y="477" width="36" height="12" fill="#000"/>
<text x="76.5" y="479.6">底必买</text>
<text x="287" y="487.6">底必买</text>
<text x="903" y="566.6">底必买</text>
</g>
<g shape-rendering="crispEdges">
<polygon points="87.6,469.0 97.6,472.0 105.1,477.0 112.7,480.0 120.2,482.0 126.4,482.0 129.6,479.5 129.6,479.5 126.4,483.0 120.2,483.8 112.7,482.3 105.1,479.0 97.6,473.8 87.6,470.0" fill="#006838" stroke="#006838" stroke-width="0.4" stroke-linejoin="round"/>
<polygon points="207.5,452.0 218.4,454.2 231.7,455.4 240.0,457.0 248.4,460.9 255.0,464.2 261.8,468.4 268.4,473.0 275.0,474.7 280.0,475.0 280.0,475.6 275.0,475.9 268.4,475.9 261.8,474.2 255.0,469.2 248.4,464.2 240.0,460.0 231.7,457.0 218.4,455.4 207.5,452.7" fill="#006838" stroke="#006838" stroke-width="0.4" stroke-linejoin="round"/>
<polygon points="424.3,291.0 430.0,294.7 436.7,299.7 443.4,308.0 450.0,314.7 456.8,320.5 463.5,325.0 470.0,325.9 476.8,326.4 476.8,326.9 473.5,326.7 466.8,328.0 460.0,328.5 453.4,325.5 446.8,318.9 440.0,311.4 436.7,305.5 433.4,299.7 424.3,291.0" fill="#006838" stroke="#006838" stroke-width="0.4" stroke-linejoin="round"/>
<polygon points="476.8,326.4 483.5,329.7 488.5,334.7 491.7,340.9 498.3,350.9 505.0,358.4 511.7,363.0 517.5,363.0 517.5,363.4 510.9,369.7 503.4,363.4 496.7,356.7 490.2,344.5 485.2,335.6 480.2,328.9 476.8,326.9" fill="#006838" stroke="#006838" stroke-width="0.4" stroke-linejoin="round"/>
<polygon points="555.0,352.3 561.7,353.4 568.4,357.5 575.0,363.4 581.8,370.0 588.4,376.7 595.0,380.9 601.8,386.7 608.5,392.6 615.0,398.4 621.7,403.5 628.4,406.7 636.7,409.2 643.4,411.7 650.0,418.4 655.0,425.9 660.0,435.0 665.0,445.9 670.0,457.0 674.0,467.0 678.4,475.5 683.4,485.9 688.4,494.2 693.4,500.0 698.4,504.2 706.7,508.0 715.0,510.4 728.4,511.4 728.4,512.2 713.4,512.6 706.7,510.9 698.4,508.9 691.7,508.4 686.7,503.4 681.7,495.9 678.0,489.5 675.0,484.0 671.0,473.4 666.8,462.0 663.4,454.2 658.4,443.4 653.4,429.2 648.4,420.0 643.4,415.0 636.7,410.9 630.0,410.0 622.5,409.2 616.7,404.5 611.8,401.5 605.0,395.5 598.4,389.2 591.8,384.7 585.0,380.9 578.4,374.2 571.8,365.9 565.0,357.5 558.4,353.7 555.0,352.7" fill="#006838" stroke="#006838" stroke-width="0.4" stroke-linejoin="round"/>
<polygon points="831.7,500.0 838.4,505.0 845.0,509.2 853.4,512.5 860.0,517.5 866.7,525.0 873.4,535.9 880.0,543.4 885.0,548.4 890.0,552.0 897.6,552.0 897.6,552.0 889.3,557.9 881.7,552.6 875.0,545.0 868.4,535.0 861.7,523.4 855.0,516.7 848.4,512.5 840.9,511.7 835.0,505.0 831.7,500.0" fill="#006838" stroke="#006838" stroke-width="0.4" stroke-linejoin="round"/>
<path d="M3 464h11v1h-11zM1 463h2v1h-2z" fill="#006838"/>
<path d="M56 468h15v1h-15zM42 464h2v1h-2zM44 465h7v1h-7zM54 467h3v1h-3zM50 466h4v1h-4z" fill="#006838"/>
<path d="M520 360h2v1h-2zM519 361h1v1h-1zM518 362h1v1h-1zM517 363h1v1h-1z" fill="#006838"/>
<path d="M735 515h2v1h-2zM745 519h4v1h-4zM752 521h4v1h-4zM768 524h4v1h-4zM760 523h8v1h-8zM749 520h3v1h-3zM733 514h2v1h-2zM756 522h4v1h-4zM729 512h2v1h-2zM737 516h3v1h-3zM742 518h3v1h-3zM731 513h2v1h-2zM740 517h2v1h-2zM728 511h1v1h-1z" fill="#006838"/>
<path d="M275 475h6v1h-6z" fill="#006838"/>
</g>
<rect x="1" y="461" width="1008" height="2" fill="#ffff00" shape-rendering="crispEdges"/>
<g transform="translate(189.5,450)">
<path d="M5.7 4.1L7.2 5.9L8.2 6.1H13.1V8.8H10.2L9.3 10.4L11 13L13.9 15.4V16.3H9.9L7.6 13.2L6.9 12.7L5.6 13.6L4 16.3H0.1V15L3 12.1L4.3 9L4.3 6.2Z" fill="#dcaa40"/>
<path d="M5.4 6.2L7 7.2L11.8 7.2L11.8 7.9L8.8 8.2L8 10.2L8.6 12L6.8 11.4L4.6 13.4L5.4 9.6Z" fill="#f4d595"/>
<circle cx="8.05" cy="2" r="1.85" fill="#dcaa40"/><circle cx="8.05" cy="2" r="1.15" fill="#fff8d0"/>
</g>
<g transform="translate(420,291.5)">
<path d="M5.7 4.1L7.2 5.9L8.2 6.1H13.1V8.8H10.2L9.3 10.4L11 13L13.9 15.4V16.3H9.9L7.6 13.2L6.9 12.7L5.6 13.6L4 16.3H0.1V15L3 12.1L4.3 9L4.3 6.2Z" fill="#dcaa40"/>
<path d="M5.4 6.2L7 7.2L11.8 7.2L11.8 7.9L8.8 8.2L8 10.2L8.6 12L6.8 11.4L4.6 13.4L5.4 9.6Z" fill="#f4d595"/>
<circle cx="8.05" cy="2" r="1.85" fill="#dcaa40"/><circle cx="8.05" cy="2" r="1.15" fill="#fff8d0"/>
</g>
<g transform="translate(546,351)">
<path d="M5.7 4.1L7.2 5.9L8.2 6.1H13.1V8.8H10.2L9.3 10.4L11 13L13.9 15.4V16.3H9.9L7.6 13.2L6.9 12.7L5.6 13.6L4 16.3H0.1V15L3 12.1L4.3 9L4.3 6.2Z" fill="#dcaa40"/>
<path d="M5.4 6.2L7 7.2L11.8 7.2L11.8 7.9L8.8 8.2L8 10.2L8.6 12L6.8 11.4L4.6 13.4L5.4 9.6Z" fill="#f4d595"/>
<circle cx="8.05" cy="2" r="1.85" fill="#dcaa40"/><circle cx="8.05" cy="2" r="1.15" fill="#fff8d0"/>
</g>
</svg>
</body></html>
